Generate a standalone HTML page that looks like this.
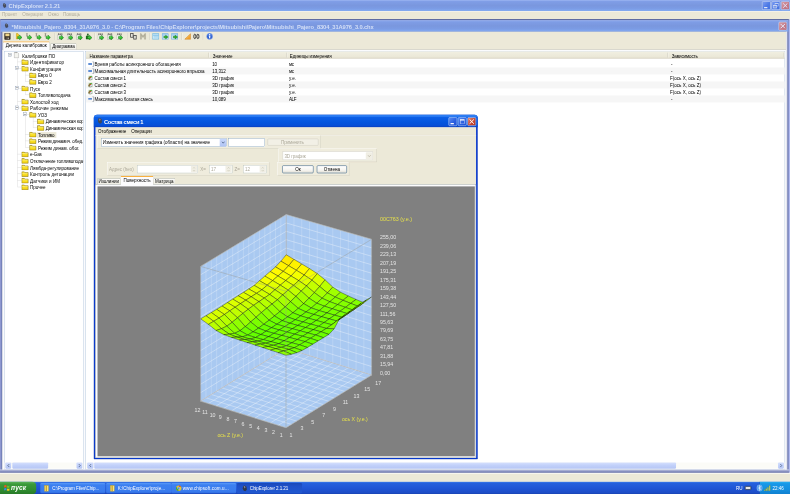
<!DOCTYPE html><html><head><meta charset="utf-8"><title>ChipExplorer 2.1.21</title><style>
*{box-sizing:border-box}
html,body{margin:0;padding:0}
body{width:790px;height:494px;overflow:hidden;background:#ece9d8;position:relative}
#w{position:absolute;left:0;top:0;width:1920px;height:1201px;transform:scale(.411458);transform-origin:0 0;filter:grayscale(0);font:11px "Liberation Sans",sans-serif;color:#000;overflow:hidden;background:#ece9d8}
#w div,#w span,#w svg{position:absolute}
.t{white-space:nowrap;line-height:14px;height:14px}
.b{font-weight:bold}
</style></head><body><div id="w">
<div style="left:0px;top:0px;width:1920px;height:26.6px;background:linear-gradient(#9db6f2 0%,#7f9de6 14%,#7a97de 50%,#7b9be4 75%,#83abf1 100%)"></div>
<svg style="left:5px;top:7px" width="12" height="13" viewBox="0 0 14 16"><path d="M3 2 L7 1 L11 4 L12 11 L8 15 L4 13 L2 8 Z" fill="#454b5c"/><path d="M4 3 L7 2 L9 5 L6 8 Z" fill="#6a7080"/></svg>
<div class="t b" style="left:20.9px;top:7.8px;font-size:14px;color:#d4dff7;letter-spacing:-0.292px;">ChipExplorer 2.1.21</div>
<div style="left:1852px;top:3px;width:21px;height:21px;background:linear-gradient(135deg,#7f9ef0,#4d7ae6 55%,#4470de);border:1px solid #dfe6f8;border-radius:3px"><div style="left:4px;top:13px;width:8px;height:3px;background:#dfe6f8"></div></div>
<div style="left:1875px;top:3px;width:21px;height:21px;background:linear-gradient(135deg,#7f9ef0,#4d7ae6 55%,#4470de);border:1px solid #dfe6f8;border-radius:3px"><div style="left:7px;top:3px;width:9px;height:8px;border:1px solid #dfe6f8;border-top-width:2px"></div><div style="left:3px;top:8px;width:9px;height:8px;border:1px solid #dfe6f8;border-top-width:2px;background:#7a98e4"></div></div>
<div style="left:1898px;top:3px;width:21px;height:21px;background:linear-gradient(135deg,#d9a0a8,#c47a88 60%,#b86c7c);border:1px solid #dfe6f8;border-radius:3px"><svg style="left:0;top:0" width="19" height="19" viewBox="0 0 19 19"><path d="M5 5 L14 14 M14 5 L5 14" stroke="#dfe6f8" stroke-width="2.4" stroke-linecap="round"/></svg></div>
<div style="left:0px;top:26.6px;width:1920px;height:21px;background:#ece9d8;border-top:1.6px solid #fff"></div>
<div class="t" style="left:4.6px;top:28.5px;color:#b2ae9e;letter-spacing:0.118px;">Проект</div>
<div class="t" style="left:54.0px;top:28.5px;color:#b2ae9e;letter-spacing:-0.083px;">Операции</div>
<div class="t" style="left:116.9px;top:28.5px;color:#b2ae9e;letter-spacing:0.172px;">Окно</div>
<div class="t" style="left:153.1px;top:28.5px;color:#b2ae9e;letter-spacing:-0.195px;">Помощь</div>
<div style="left:0px;top:47px;width:1920px;height:1102px;background:#b0b9ef"></div>
<div style="left:1px;top:47.4px;width:1916px;height:1101.6px;background:#7682ba;border-top:2px solid #47558f"></div>
<div style="left:2px;top:49.4px;width:1914px;height:27.6px;background:linear-gradient(#9db6f2 0%,#7f9de6 14%,#7a97de 50%,#7b9be4 75%,#83abf1 100%)"></div>
<svg style="left:10px;top:56px" width="12" height="13" viewBox="0 0 14 16"><path d="M3 2 L7 1 L11 4 L12 11 L8 15 L4 13 L2 8 Z" fill="#454b5c"/><path d="M4 3 L7 2 L9 5 L6 8 Z" fill="#6a7080"/></svg>
<div class="t b" style="left:28.2px;top:57.8px;font-size:14px;color:#d4dff7;letter-spacing:-0.287px;">*Mitsubishi_Pajero_8304_31A976_3.0 - C:\Program Files\ChipExplorer\projects\Mitsubishi\Pajero\Mitsubishi_Pajero_8304_31A976_3.0.chx</div>
<div style="left:1892px;top:53px;width:21px;height:21px;background:linear-gradient(135deg,#d9a0a8,#c47a88 60%,#b86c7c);border:1px solid #dfe6f8;border-radius:3px"><svg style="left:0;top:0" width="19" height="19" viewBox="0 0 19 19"><path d="M5 5 L14 14 M14 5 L5 14" stroke="#dfe6f8" stroke-width="2.4" stroke-linecap="round"/></svg></div>
<div style="left:6px;top:77px;width:1907px;height:1068px;background:#ece9d8"></div>
<div style="left:1910px;top:77px;width:3px;height:1068px;background:#e4e5ee"></div>
<svg style="left:9.7px;top:80px" width="17" height="17" viewBox="0 0 17 17"><rect x="1" y="1" width="14" height="15" rx="1" fill="#3a3228" stroke="#201a14"/><rect x="3" y="1.5" width="10" height="6.5" fill="#f0d78c"/><rect x="4" y="10.5" width="8" height="5" fill="#5a5046"/><rect x="9" y="11.5" width="2" height="3.5" fill="#d8d0c0"/></svg>
<div style="left:32.3px;top:80px;width:2px;height:17px;border-left:1px solid #c5c2b2;border-right:1px solid #fff"></div>
<svg style="left:38.2px;top:80px" width="17" height="17" viewBox="0 0 17 17"><path d="M1.5 1.5l4 0 3 5-3 8h-4z" fill="#f4cc28" stroke="#b08a10"/><path d="M5 8.5h4.5v-3.2l6 5.7-6 5.7v-3.2h-4.5z" fill="#2fc22f" stroke="#126a12" stroke-width="1.1" stroke-linejoin="round"/><path d="M5.8 9.7h4v-1.5" stroke="#8cf08c" stroke-width="1" fill="none"/></svg>
<svg style="left:61.5px;top:80px" width="17" height="17" viewBox="0 0 17 17"><path d="M1.5 2h4M3.5 2v5M1.5 7.5h4.5" stroke="#5a5a48" stroke-width="1.3" fill="none"/><path d="M5 8.5h4.5v-3.2l6 5.7-6 5.7v-3.2h-4.5z" fill="#2fc22f" stroke="#126a12" stroke-width="1.1" stroke-linejoin="round"/><path d="M5.8 9.7h4v-1.5" stroke="#8cf08c" stroke-width="1" fill="none"/></svg>
<svg style="left:84.6px;top:80px" width="17" height="17" viewBox="0 0 17 17"><path d="M1.5 2h4M3.5 2v5M1.5 7.5h4.5" stroke="#5a5a48" stroke-width="1.3" fill="none"/><path d="M5 8.5h4.5v-3.2l6 5.7-6 5.7v-3.2h-4.5z" fill="#2fc22f" stroke="#126a12" stroke-width="1.1" stroke-linejoin="round"/><path d="M5.8 9.7h4v-1.5" stroke="#8cf08c" stroke-width="1" fill="none"/></svg>
<svg style="left:107.4px;top:80px" width="17" height="17" viewBox="0 0 17 17"><path d="M1.5 2h4M3.5 2v5M1.5 7.5h4.5" stroke="#5a5a48" stroke-width="1.3" fill="none"/><path d="M5 8.5h4.5v-3.2l6 5.7-6 5.7v-3.2h-4.5z" fill="#2fc22f" stroke="#126a12" stroke-width="1.1" stroke-linejoin="round"/><path d="M5.8 9.7h4v-1.5" stroke="#8cf08c" stroke-width="1" fill="none"/></svg>
<div style="left:132.0px;top:80px;width:2px;height:17px;border-left:1px solid #c5c2b2;border-right:1px solid #fff"></div>
<svg style="left:138.5px;top:80px" width="17" height="17" viewBox="0 0 17 17"><rect x="1" y="5" width="12" height="11" fill="#f4f6f0" stroke="#9aa098"/><path d="M2 2h3M6.5 2h2M10 2h2.5M2 4h2M5.5 4h3.5M10.5 4h2" stroke="#333" stroke-width="1.5" fill="none"/><path d="M5 9h4.5v-3.2l6 5.7-6 5.7v-3.2h-4.5z" fill="#2fc22f" stroke="#126a12" stroke-width="1.1" stroke-linejoin="round"/><path d="M5.8 10.2h4v-1.5" stroke="#8cf08c" stroke-width="1" fill="none"/></svg>
<svg style="left:161.6px;top:80px" width="17" height="17" viewBox="0 0 17 17"><rect x="1" y="5" width="12" height="11" fill="#f4f6f0" stroke="#9aa098"/><path d="M2 2h3M6.5 2h2M10 2h2.5M2 4h2M5.5 4h3.5M10.5 4h2" stroke="#333" stroke-width="1.5" fill="none"/><path d="M5 9h4.5v-3.2l6 5.7-6 5.7v-3.2h-4.5z" fill="#2fc22f" stroke="#126a12" stroke-width="1.1" stroke-linejoin="round"/><path d="M5.8 10.2h4v-1.5" stroke="#8cf08c" stroke-width="1" fill="none"/></svg>
<svg style="left:184.7px;top:80px" width="17" height="17" viewBox="0 0 17 17"><rect x="1" y="5" width="12" height="11" fill="#f4f6f0" stroke="#9aa098"/><path d="M2 2h3M6.5 2h2M10 2h2.5M2 4h2M5.5 4h3.5M10.5 4h2" stroke="#333" stroke-width="1.5" fill="none"/><path d="M5 9h4.5v-3.2l6 5.7-6 5.7v-3.2h-4.5z" fill="#2fc22f" stroke="#126a12" stroke-width="1.1" stroke-linejoin="round"/><path d="M5.8 10.2h4v-1.5" stroke="#8cf08c" stroke-width="1" fill="none"/></svg>
<svg style="left:207.8px;top:80px" width="17" height="17" viewBox="0 0 17 17"><circle cx="5.5" cy="3.5" r="2.3" fill="#2a6a2a"/><path d="M1 8q4.5-3 9 0v7H1z" fill="#1e7a1e" stroke="#0e4a0e"/><path d="M5 9h4.5v-3.2l6 5.7-6 5.7v-3.2h-4.5z" fill="#2fc22f" stroke="#126a12" stroke-width="1.1" stroke-linejoin="round"/><path d="M5.8 10.2h4v-1.5" stroke="#8cf08c" stroke-width="1" fill="none"/></svg>
<div style="left:229.7px;top:80px;width:2px;height:17px;border-left:1px solid #c5c2b2;border-right:1px solid #fff"></div>
<svg style="left:237.0px;top:80px" width="17" height="17" viewBox="0 0 17 17"><rect x="1" y="5" width="12" height="11" fill="#f4f6f0" stroke="#9aa098"/><path d="M2 2h3M6.5 2h2M10 2h2.5M2 4h2M5.5 4h3.5M10.5 4h2" stroke="#333" stroke-width="1.5" fill="none"/><path d="M5 9h4.5v-3.2l6 5.7-6 5.7v-3.2h-4.5z" fill="#2fc22f" stroke="#126a12" stroke-width="1.1" stroke-linejoin="round"/><path d="M5.8 10.2h4v-1.5" stroke="#8cf08c" stroke-width="1" fill="none"/></svg>
<svg style="left:260.1px;top:80px" width="17" height="17" viewBox="0 0 17 17"><rect x="1" y="5" width="12" height="11" fill="#f4f6f0" stroke="#9aa098"/><path d="M2 2h3M6.5 2h2M10 2h2.5M2 4h2M5.5 4h3.5M10.5 4h2" stroke="#333" stroke-width="1.5" fill="none"/><path d="M5 9h4.5v-3.2l6 5.7-6 5.7v-3.2h-4.5z" fill="#2fc22f" stroke="#126a12" stroke-width="1.1" stroke-linejoin="round"/><path d="M5.8 10.2h4v-1.5" stroke="#8cf08c" stroke-width="1" fill="none"/></svg>
<svg style="left:283.1px;top:80px" width="17" height="17" viewBox="0 0 17 17"><rect x="1" y="5" width="12" height="11" fill="#f4f6f0" stroke="#9aa098"/><path d="M2 2h3M6.5 2h2M10 2h2.5M2 4h2M5.5 4h3.5M10.5 4h2" stroke="#333" stroke-width="1.5" fill="none"/><path d="M5 9h4.5v-3.2l6 5.7-6 5.7v-3.2h-4.5z" fill="#2fc22f" stroke="#126a12" stroke-width="1.1" stroke-linejoin="round"/><path d="M5.8 10.2h4v-1.5" stroke="#8cf08c" stroke-width="1" fill="none"/></svg>
<div style="left:309.4px;top:80px;width:2px;height:17px;border-left:1px solid #c5c2b2;border-right:1px solid #fff"></div>
<svg style="left:315.9px;top:80px" width="17" height="17" viewBox="0 0 17 17"><rect x="1.5" y="1.5" width="6" height="9" fill="#e8e8e0" stroke="#383838" stroke-width="1.8"/><rect x="9" y="6" width="6" height="9" fill="#e8e8e0" stroke="#383838" stroke-width="1.8"/></svg>
<svg style="left:339.0px;top:80px" width="17" height="17" viewBox="0 0 17 17"><path d="M2 15.5V1.5h2l4.5 6 4.5-6h2v14h-3V7l-3.5 4.5L5 7v8.5z" fill="#b4b09c" stroke="#98947f" stroke-width=".6"/></svg>
<div style="left:362.9px;top:80px;width:2px;height:17px;border-left:1px solid #c5c2b2;border-right:1px solid #fff"></div>
<svg style="left:370.1px;top:80px" width="17" height="17" viewBox="0 0 17 17"><rect x="1" y="2" width="15" height="13" fill="#dcf2fc" stroke="#5aaee0" stroke-width="1.5"/><path d="M2 5.5h13" stroke="#5aaee0" stroke-width="2"/><path d="M3 9h11M3 12h11" stroke="#7cc0e4" stroke-width="1.3"/></svg>
<svg style="left:393.2px;top:80px" width="17" height="17" viewBox="0 0 17 17"><rect x="1" y="2" width="15" height="13" fill="#d4ecfa" stroke="#5aa4e0" stroke-width="1.5"/><path d="M2 5h13" stroke="#5aa4e0" stroke-width="1.6"/><path d="M5 8.2h4.5v-2.7l6.5 4.5-6.5 4.5v-2.7h-4.5z" fill="#2ab02a" stroke="#126a12" stroke-width=".9"/></svg>
<svg style="left:416.3px;top:80px" width="17" height="17" viewBox="0 0 17 17"><rect x="1" y="2" width="15" height="13" fill="#d4ecfa" stroke="#5aa4e0" stroke-width="1.5"/><path d="M2 5h13" stroke="#5aa4e0" stroke-width="1.6"/><path d="M5 8.2h4.5v-2.7l6.5 4.5-6.5 4.5v-2.7h-4.5z" fill="#2ab02a" stroke="#126a12" stroke-width=".9"/></svg>
<div style="left:441.1px;top:80px;width:2px;height:17px;border-left:1px solid #c5c2b2;border-right:1px solid #fff"></div>
<svg style="left:448.4px;top:80px" width="17" height="17" viewBox="0 0 17 17"><path d="M1 15.5L15 2v13.5z" fill="#f2a230" stroke="#c47a16"/><path d="M5 14.5L14 5.5" stroke="#f8c870" stroke-width="1.2"/></svg>
<svg style="left:469.1px;top:80px" width="17" height="17" viewBox="0 0 17 17"><ellipse cx="4.5" cy="8.5" rx="2.6" ry="5.5" fill="none" stroke="#2c2c2c" stroke-width="2.1"/><ellipse cx="12" cy="8.5" rx="2.6" ry="5.5" fill="none" stroke="#2c2c2c" stroke-width="2.1"/></svg>
<div style="left:493.4px;top:80px;width:2px;height:17px;border-left:1px solid #c5c2b2;border-right:1px solid #fff"></div>
<svg style="left:500.7px;top:80px" width="17" height="17" viewBox="0 0 17 17"><circle cx="8.5" cy="8.5" r="7.4" fill="#2a5ccc" stroke="#b4c8f2" stroke-width="1.2"/><circle cx="8.5" cy="6" r="5" fill="#5c8cec" opacity=".6"/><rect x="7.2" y="7" width="2.7" height="6.2" fill="#fff"/><circle cx="8.5" cy="4.4" r="1.6" fill="#fff"/></svg>
<div style="left:121.5px;top:104.5px;width:64.4px;height:17.0px;background:linear-gradient(#fdfdfb,#f0eee4);border:1px solid #919b9c;border-bottom:none;border-radius:3px 3px 0 0"></div>
<div class="t" style="left:126.9px;top:106.0px;letter-spacing:-0.280px;">Диаграмма</div>
<div style="left:6px;top:119.8px;width:1904px;height:1px;background:#a8aaa0"></div>
<div style="left:6px;top:120.8px;width:1904px;height:1022.5px;background:#fafbfe"></div>
<div style="left:7.3px;top:100.4px;width:113.7px;height:22.4px;background:#fcfcfe;border:1px solid #919b9c;border-bottom:none;border-top:3px solid #f8b040;border-radius:3px 3px 0 0"></div>
<div class="t" style="left:13.9px;top:103.8px;letter-spacing:0.016px;">Дерево калибровок</div>
<div style="left:9.7px;top:123.9px;width:194.2px;height:1016.6999999999999px;background:#fff;border:1px solid #a9bdd8"></div>
<div style="left:207.6px;top:123.9px;width:1700.2px;height:1016.6999999999999px;background:#fff;border:1px solid #a9bdd8"></div>
<div style="left:10.7px;top:124.9px;width:191.2px;height:996.5px;overflow:hidden">
<div style="left:31.0px;top:17.0px;width:1px;height:312.0px;background:#d6d6d6"></div>
<div style="left:50.0px;top:49.0px;width:1px;height:24.0px;background:#d6d6d6"></div>
<div style="left:50.0px;top:97.0px;width:1px;height:8.0px;background:#d6d6d6"></div>
<div style="left:50.0px;top:145.0px;width:1px;height:88.0px;background:#d6d6d6"></div>
<div style="left:68.9px;top:161.0px;width:1px;height:24.0px;background:#d6d6d6"></div>
<div style="left:8.9px;top:4.5px;width:9px;height:9px;border:1px solid #8a9ab0;background:#fff"><div style="left:1px;top:3px;width:5px;height:1px;background:#333"></div></div>
<svg style="left:22.8px;top:0.0px" width="14" height="17" viewBox="0 0 14 17"><path d="M1.5 2.5h8l3 3v10h-11z" fill="#f4f4f0" stroke="#909090"/><path d="M4 1v3M7 1v3" stroke="#707070"/></svg>
<div class="t" style="left:43.5px;top:3.8px;letter-spacing:0.001px;">Калибровки ПО</div>
<div style="left:31.099999999999998px;top:25.0px;width:10.7px;height:1px;background:#d4d4d4"></div>
<svg style="left:41.8px;top:19.0px" width="18" height="14" viewBox="0 0 18 14"><path d="M1 1.5h6l1.5 2H16.5v9.5H1z" fill="#f9df22" stroke="#6e5c10" stroke-width="1.3"/><path d="M2 5h13.5" stroke="#fff6a8" stroke-width="1.4"/><path d="M2 11.5h13.5" stroke="#e0b810" stroke-width="1.4"/></svg>
<div class="t" style="left:62.5px;top:19.8px;letter-spacing:0.109px;">Идентификатор</div>
<div style="left:31.099999999999998px;top:41.0px;width:10.7px;height:1px;background:#d4d4d4"></div>
<div style="left:26.199999999999996px;top:36.5px;width:9px;height:9px;border:1px solid #8a9ab0;background:#fff"><div style="left:1px;top:3px;width:5px;height:1px;background:#333"></div></div>
<svg style="left:41.8px;top:35.0px" width="18" height="14" viewBox="0 0 18 14"><path d="M1 1.5h6l1.5 2H16.5v9.5H1z" fill="#f9df22" stroke="#6e5c10" stroke-width="1.3"/><path d="M2 5h13.5" stroke="#fff6a8" stroke-width="1.4"/><path d="M2 11.5h13.5" stroke="#e0b810" stroke-width="1.4"/></svg>
<div class="t" style="left:62.5px;top:35.8px;letter-spacing:0.127px;">Конфигурация</div>
<div style="left:50.099999999999994px;top:57.0px;width:10.7px;height:1px;background:#d4d4d4"></div>
<svg style="left:60.8px;top:51.0px" width="18" height="14" viewBox="0 0 18 14"><path d="M1 1.5h6l1.5 2H16.5v9.5H1z" fill="#f9df22" stroke="#6e5c10" stroke-width="1.3"/><path d="M2 5h13.5" stroke="#fff6a8" stroke-width="1.4"/><path d="M2 11.5h13.5" stroke="#e0b810" stroke-width="1.4"/></svg>
<div class="t" style="left:81.5px;top:51.8px;letter-spacing:-0.216px;">Евро 0</div>
<div style="left:50.099999999999994px;top:73.0px;width:10.7px;height:1px;background:#d4d4d4"></div>
<svg style="left:60.8px;top:67.0px" width="18" height="14" viewBox="0 0 18 14"><path d="M1 1.5h6l1.5 2H16.5v9.5H1z" fill="#f9df22" stroke="#6e5c10" stroke-width="1.3"/><path d="M2 5h13.5" stroke="#fff6a8" stroke-width="1.4"/><path d="M2 11.5h13.5" stroke="#e0b810" stroke-width="1.4"/></svg>
<div class="t" style="left:81.5px;top:67.8px;letter-spacing:-0.216px;">Евро 2</div>
<div style="left:31.099999999999998px;top:89.0px;width:10.7px;height:1px;background:#d4d4d4"></div>
<div style="left:26.199999999999996px;top:84.5px;width:9px;height:9px;border:1px solid #8a9ab0;background:#fff"><div style="left:1px;top:3px;width:5px;height:1px;background:#333"></div></div>
<svg style="left:41.8px;top:83.0px" width="18" height="14" viewBox="0 0 18 14"><path d="M1 1.5h6l1.5 2H16.5v9.5H1z" fill="#f9df22" stroke="#6e5c10" stroke-width="1.3"/><path d="M2 5h13.5" stroke="#fff6a8" stroke-width="1.4"/><path d="M2 11.5h13.5" stroke="#e0b810" stroke-width="1.4"/></svg>
<div class="t" style="left:62.5px;top:83.8px;letter-spacing:0.056px;">Пуск</div>
<div style="left:50.099999999999994px;top:105.0px;width:10.7px;height:1px;background:#d4d4d4"></div>
<svg style="left:60.8px;top:99.0px" width="18" height="14" viewBox="0 0 18 14"><path d="M1 1.5h6l1.5 2H16.5v9.5H1z" fill="#f9df22" stroke="#6e5c10" stroke-width="1.3"/><path d="M2 5h13.5" stroke="#fff6a8" stroke-width="1.4"/><path d="M2 11.5h13.5" stroke="#e0b810" stroke-width="1.4"/></svg>
<div class="t" style="left:81.5px;top:99.8px;letter-spacing:0.089px;">Топливоподача</div>
<div style="left:31.099999999999998px;top:121.0px;width:10.7px;height:1px;background:#d4d4d4"></div>
<svg style="left:41.8px;top:115.0px" width="18" height="14" viewBox="0 0 18 14"><path d="M1 1.5h6l1.5 2H16.5v9.5H1z" fill="#f9df22" stroke="#6e5c10" stroke-width="1.3"/><path d="M2 5h13.5" stroke="#fff6a8" stroke-width="1.4"/><path d="M2 11.5h13.5" stroke="#e0b810" stroke-width="1.4"/></svg>
<div class="t" style="left:62.5px;top:115.8px;letter-spacing:0.009px;">Холостой ход</div>
<div style="left:31.099999999999998px;top:136.99999999999997px;width:10.7px;height:1px;background:#d4d4d4"></div>
<div style="left:26.199999999999996px;top:132.5px;width:9px;height:9px;border:1px solid #8a9ab0;background:#fff"><div style="left:1px;top:3px;width:5px;height:1px;background:#333"></div></div>
<svg style="left:41.8px;top:131.0px" width="18" height="14" viewBox="0 0 18 14"><path d="M1 1.5h6l1.5 2H16.5v9.5H1z" fill="#f9df22" stroke="#6e5c10" stroke-width="1.3"/><path d="M2 5h13.5" stroke="#fff6a8" stroke-width="1.4"/><path d="M2 11.5h13.5" stroke="#e0b810" stroke-width="1.4"/></svg>
<div class="t" style="left:62.5px;top:131.8px;letter-spacing:0.389px;">Рабочие режимы</div>
<div style="left:50.099999999999994px;top:152.99999999999997px;width:10.7px;height:1px;background:#d4d4d4"></div>
<div style="left:45.199999999999996px;top:148.5px;width:9px;height:9px;border:1px solid #8a9ab0;background:#fff"><div style="left:1px;top:3px;width:5px;height:1px;background:#333"></div></div>
<svg style="left:60.8px;top:147.0px" width="18" height="14" viewBox="0 0 18 14"><path d="M1 1.5h6l1.5 2H16.5v9.5H1z" fill="#f9df22" stroke="#6e5c10" stroke-width="1.3"/><path d="M2 5h13.5" stroke="#fff6a8" stroke-width="1.4"/><path d="M2 11.5h13.5" stroke="#e0b810" stroke-width="1.4"/></svg>
<div class="t" style="left:81.5px;top:147.8px;letter-spacing:0.017px;">УОЗ</div>
<div style="left:69.0px;top:168.99999999999997px;width:10.7px;height:1px;background:#d4d4d4"></div>
<svg style="left:79.7px;top:163.0px" width="18" height="14" viewBox="0 0 18 14"><path d="M1 1.5h6l1.5 2H16.5v9.5H1z" fill="#f9df22" stroke="#6e5c10" stroke-width="1.3"/><path d="M2 5h13.5" stroke="#fff6a8" stroke-width="1.4"/><path d="M2 11.5h13.5" stroke="#e0b810" stroke-width="1.4"/></svg>
<div class="t" style="left:100.4px;top:163.8px;letter-spacing:-0.093px;">Динамическая коррекция</div>
<div style="left:69.0px;top:184.99999999999997px;width:10.7px;height:1px;background:#d4d4d4"></div>
<svg style="left:79.7px;top:179.0px" width="18" height="14" viewBox="0 0 18 14"><path d="M1 1.5h6l1.5 2H16.5v9.5H1z" fill="#f9df22" stroke="#6e5c10" stroke-width="1.3"/><path d="M2 5h13.5" stroke="#fff6a8" stroke-width="1.4"/><path d="M2 11.5h13.5" stroke="#e0b810" stroke-width="1.4"/></svg>
<div class="t" style="left:100.4px;top:179.8px;letter-spacing:-0.093px;">Динамическая коррекция</div>
<div style="left:50.099999999999994px;top:200.99999999999997px;width:10.7px;height:1px;background:#d4d4d4"></div>
<svg style="left:60.8px;top:195.0px" width="18" height="14" viewBox="0 0 18 14"><path d="M1 1.5h6l1.5 2H16.5v9.5H1z" fill="#f9df22" stroke="#6e5c10" stroke-width="1.3"/><path d="M2 5h13.5" stroke="#fff6a8" stroke-width="1.4"/><path d="M2 11.5h13.5" stroke="#e0b810" stroke-width="1.4"/></svg>
<div class="t" style="left:81.5px;top:195.8px;letter-spacing:-0.319px;background:#ece9d8;padding:0 5px 0 2px;margin-left:-2px;">Топливо</div>
<div style="left:50.099999999999994px;top:216.99999999999997px;width:10.7px;height:1px;background:#d4d4d4"></div>
<svg style="left:60.8px;top:211.0px" width="18" height="14" viewBox="0 0 18 14"><path d="M1 1.5h6l1.5 2H16.5v9.5H1z" fill="#f9df22" stroke="#6e5c10" stroke-width="1.3"/><path d="M2 5h13.5" stroke="#fff6a8" stroke-width="1.4"/><path d="M2 11.5h13.5" stroke="#e0b810" stroke-width="1.4"/></svg>
<div class="t" style="left:81.5px;top:211.8px;letter-spacing:-0.241px;">Режим динамич. обед.</div>
<div style="left:50.099999999999994px;top:232.99999999999997px;width:10.7px;height:1px;background:#d4d4d4"></div>
<svg style="left:60.8px;top:227.0px" width="18" height="14" viewBox="0 0 18 14"><path d="M1 1.5h6l1.5 2H16.5v9.5H1z" fill="#f9df22" stroke="#6e5c10" stroke-width="1.3"/><path d="M2 5h13.5" stroke="#fff6a8" stroke-width="1.4"/><path d="M2 11.5h13.5" stroke="#e0b810" stroke-width="1.4"/></svg>
<div class="t" style="left:81.5px;top:227.8px;letter-spacing:0.053px;">Режим динам. обог.</div>
<div style="left:31.099999999999998px;top:248.99999999999997px;width:10.7px;height:1px;background:#d4d4d4"></div>
<svg style="left:41.8px;top:243.0px" width="18" height="14" viewBox="0 0 18 14"><path d="M1 1.5h6l1.5 2H16.5v9.5H1z" fill="#f9df22" stroke="#6e5c10" stroke-width="1.3"/><path d="M2 5h13.5" stroke="#fff6a8" stroke-width="1.4"/><path d="M2 11.5h13.5" stroke="#e0b810" stroke-width="1.4"/></svg>
<div class="t" style="left:62.5px;top:243.8px;letter-spacing:-0.353px;">e-Gas</div>
<div style="left:31.099999999999998px;top:265.0px;width:10.7px;height:1px;background:#d4d4d4"></div>
<svg style="left:41.8px;top:259.0px" width="18" height="14" viewBox="0 0 18 14"><path d="M1 1.5h6l1.5 2H16.5v9.5H1z" fill="#f9df22" stroke="#6e5c10" stroke-width="1.3"/><path d="M2 5h13.5" stroke="#fff6a8" stroke-width="1.4"/><path d="M2 11.5h13.5" stroke="#e0b810" stroke-width="1.4"/></svg>
<div class="t" style="left:62.5px;top:259.8px;letter-spacing:-0.160px;">Отключение топливоподачи</div>
<div style="left:31.099999999999998px;top:281.0px;width:10.7px;height:1px;background:#d4d4d4"></div>
<svg style="left:41.8px;top:275.0px" width="18" height="14" viewBox="0 0 18 14"><path d="M1 1.5h6l1.5 2H16.5v9.5H1z" fill="#f9df22" stroke="#6e5c10" stroke-width="1.3"/><path d="M2 5h13.5" stroke="#fff6a8" stroke-width="1.4"/><path d="M2 11.5h13.5" stroke="#e0b810" stroke-width="1.4"/></svg>
<div class="t" style="left:62.5px;top:275.8px;letter-spacing:-0.025px;">Лямбда-регулирование</div>
<div style="left:31.099999999999998px;top:297.0px;width:10.7px;height:1px;background:#d4d4d4"></div>
<svg style="left:41.8px;top:291.0px" width="18" height="14" viewBox="0 0 18 14"><path d="M1 1.5h6l1.5 2H16.5v9.5H1z" fill="#f9df22" stroke="#6e5c10" stroke-width="1.3"/><path d="M2 5h13.5" stroke="#fff6a8" stroke-width="1.4"/><path d="M2 11.5h13.5" stroke="#e0b810" stroke-width="1.4"/></svg>
<div class="t" style="left:62.5px;top:291.8px;letter-spacing:0.117px;">Контроль детонации</div>
<div style="left:31.099999999999998px;top:313.0px;width:10.7px;height:1px;background:#d4d4d4"></div>
<svg style="left:41.8px;top:307.0px" width="18" height="14" viewBox="0 0 18 14"><path d="M1 1.5h6l1.5 2H16.5v9.5H1z" fill="#f9df22" stroke="#6e5c10" stroke-width="1.3"/><path d="M2 5h13.5" stroke="#fff6a8" stroke-width="1.4"/><path d="M2 11.5h13.5" stroke="#e0b810" stroke-width="1.4"/></svg>
<div class="t" style="left:62.5px;top:307.8px;letter-spacing:0.219px;">Датчики и ИМ</div>
<div style="left:31.099999999999998px;top:329.0px;width:10.7px;height:1px;background:#d4d4d4"></div>
<svg style="left:41.8px;top:323.0px" width="18" height="14" viewBox="0 0 18 14"><path d="M1 1.5h6l1.5 2H16.5v9.5H1z" fill="#f9df22" stroke="#6e5c10" stroke-width="1.3"/><path d="M2 5h13.5" stroke="#fff6a8" stroke-width="1.4"/><path d="M2 11.5h13.5" stroke="#e0b810" stroke-width="1.4"/></svg>
<div class="t" style="left:62.5px;top:323.8px;letter-spacing:-0.033px;">Прочее</div>
</div>
<div style="left:10.7px;top:1123.8px;width:191.2px;height:15.600000000000136px;background:#fbfbf7"></div>
<div style="left:12.9px;top:1123.8px;width:14.6px;height:15.600000000000136px;background:linear-gradient(#d6e0fd,#c2d1fa 45%,#b6c6f5);border-radius:2px"><svg style="left:4px;top:3px" width="7" height="9" viewBox="0 0 7 9"><path d="M5.5 1L2 4.5 5.5 8" fill="none" stroke="#4d6185" stroke-width="2"/></svg></div>
<div style="left:185.9px;top:1123.8px;width:14.6px;height:15.600000000000136px;background:linear-gradient(#d6e0fd,#c2d1fa 45%,#b6c6f5);border-radius:2px"><svg style="left:4px;top:3px" width="7" height="9" viewBox="0 0 7 9"><path d="M1.5 1L5 4.5 1.5 8" fill="none" stroke="#4d6185" stroke-width="2"/></svg></div>
<div style="left:29.9px;top:1123.8px;width:86.8px;height:15.600000000000136px;background:linear-gradient(#d6e0fd,#c2d1fa 45%,#b6c6f5);border-radius:2px"></div>
<div style="left:208.6px;top:124.9px;width:1698.2px;height:18.5px;background:linear-gradient(#f1efe2,#ebe8d8 75%,#dedac9);border-bottom:1px solid #d0ccbc"></div>
<div class="t" style="left:217.8px;top:128.6px;letter-spacing:-0.145px;">Название параметра</div>
<div class="t" style="left:517.2px;top:128.6px;letter-spacing:-0.083px;">Значение</div>
<div class="t" style="left:704.3px;top:128.6px;letter-spacing:-0.166px;">Единицы измерения</div>
<div class="t" style="left:1632.5px;top:128.6px;letter-spacing:-0.265px;">Зависимость</div>
<div style="left:507.0px;top:127.9px;width:2px;height:12.5px;border-left:1px solid #c5c2b2;border-right:1px solid #fff"></div>
<div style="left:696.1px;top:127.9px;width:2px;height:12.5px;border-left:1px solid #c5c2b2;border-right:1px solid #fff"></div>
<div style="left:1622.3px;top:127.9px;width:2px;height:12.5px;border-left:1px solid #c5c2b2;border-right:1px solid #fff"></div>
<div style="left:1903.0px;top:127.9px;width:2px;height:12.5px;border-left:1px solid #c5c2b2;border-right:1px solid #fff"></div>
<svg style="left:213.9px;top:148.5px" width="15" height="14" viewBox="0 0 15 14"><path d="M.5 6.5h9" stroke="#2868c8" stroke-width="3.2"/><path d="M10.5 1h3v12h-3" fill="#fff" stroke="#707888" stroke-width="1.3"/></svg>
<div class="t" style="left:229.9px;top:148.5px;letter-spacing:-0.048px;">Время работы асинхронного обогащения</div>
<div class="t" style="left:516.0px;top:148.5px;letter-spacing:-0.771px;">10</div>
<div class="t" style="left:702.1px;top:148.5px;letter-spacing:-0.820px;">мс</div>
<div class="t" style="left:1630.5px;top:148.5px;">-</div>
<div style="left:208.6px;top:164.0px;width:1698.2px;height:17px;background:#f6f6f6"></div>
<svg style="left:213.9px;top:165.5px" width="15" height="14" viewBox="0 0 15 14"><path d="M.5 6.5h9" stroke="#2868c8" stroke-width="3.2"/><path d="M10.5 1h3v12h-3" fill="#fff" stroke="#707888" stroke-width="1.3"/></svg>
<div class="t" style="left:229.9px;top:165.5px;letter-spacing:-0.011px;">Максимальная длительность асинхронного впрыска</div>
<div class="t" style="left:516.0px;top:165.5px;letter-spacing:-0.180px;">13,312</div>
<div class="t" style="left:702.1px;top:165.5px;letter-spacing:-0.820px;">мс</div>
<div class="t" style="left:1630.5px;top:165.5px;">-</div>
<svg style="left:212.9px;top:182.5px" width="13" height="13" viewBox="0 0 13 13"><rect x=".5" y=".5" width="12" height="12" rx="2" fill="#dfe8d8"/><path d="M1 9l3-6 4 1-2 7z" fill="#8a7440"/><path d="M4 3l5-2 3 4-4 1z" fill="#58a838"/><path d="M6 7l5-2 1 4-5 3z" fill="#d8e4f0"/><path d="M5 5l3-1 1 2-3 1z" fill="#d04030"/><path d="M2 10l4 2 6-3" stroke="#606848" fill="none"/></svg>
<div class="t" style="left:229.9px;top:182.5px;letter-spacing:-0.227px;">Состав смеси 1</div>
<div class="t" style="left:516.0px;top:182.5px;letter-spacing:-0.124px;">3D график</div>
<div class="t" style="left:702.1px;top:182.5px;letter-spacing:0.460px;">у.е.</div>
<div class="t" style="left:1628.4px;top:182.5px;letter-spacing:0.021px;">F(ось X, ось Z)</div>
<div style="left:208.6px;top:198.0px;width:1698.2px;height:17px;background:#f6f6f6"></div>
<svg style="left:212.9px;top:199.5px" width="13" height="13" viewBox="0 0 13 13"><rect x=".5" y=".5" width="12" height="12" rx="2" fill="#dfe8d8"/><path d="M1 9l3-6 4 1-2 7z" fill="#8a7440"/><path d="M4 3l5-2 3 4-4 1z" fill="#58a838"/><path d="M6 7l5-2 1 4-5 3z" fill="#d8e4f0"/><path d="M5 5l3-1 1 2-3 1z" fill="#d04030"/><path d="M2 10l4 2 6-3" stroke="#606848" fill="none"/></svg>
<div class="t" style="left:229.9px;top:199.5px;letter-spacing:-0.227px;">Состав смеси 2</div>
<div class="t" style="left:516.0px;top:199.5px;letter-spacing:-0.124px;">3D график</div>
<div class="t" style="left:702.1px;top:199.5px;letter-spacing:0.460px;">у.е.</div>
<div class="t" style="left:1628.4px;top:199.5px;letter-spacing:0.021px;">F(ось X, ось Z)</div>
<svg style="left:212.9px;top:216.5px" width="13" height="13" viewBox="0 0 13 13"><rect x=".5" y=".5" width="12" height="12" rx="2" fill="#dfe8d8"/><path d="M1 9l3-6 4 1-2 7z" fill="#8a7440"/><path d="M4 3l5-2 3 4-4 1z" fill="#58a838"/><path d="M6 7l5-2 1 4-5 3z" fill="#d8e4f0"/><path d="M5 5l3-1 1 2-3 1z" fill="#d04030"/><path d="M2 10l4 2 6-3" stroke="#606848" fill="none"/></svg>
<div class="t" style="left:229.9px;top:216.5px;letter-spacing:-0.227px;">Состав смеси 3</div>
<div class="t" style="left:516.0px;top:216.5px;letter-spacing:-0.124px;">3D график</div>
<div class="t" style="left:702.1px;top:216.5px;letter-spacing:0.460px;">у.е.</div>
<div class="t" style="left:1628.4px;top:216.5px;letter-spacing:0.021px;">F(ось X, ось Z)</div>
<div style="left:208.6px;top:232.0px;width:1698.2px;height:17px;background:#f6f6f6"></div>
<svg style="left:213.9px;top:233.5px" width="15" height="14" viewBox="0 0 15 14"><path d="M.5 6.5h9" stroke="#2868c8" stroke-width="3.2"/><path d="M10.5 1h3v12h-3" fill="#fff" stroke="#707888" stroke-width="1.3"/></svg>
<div class="t" style="left:229.9px;top:233.5px;letter-spacing:-0.166px;">Максимально богатая смесь</div>
<div class="t" style="left:516.0px;top:233.5px;letter-spacing:-0.180px;">10,089</div>
<div class="t" style="left:702.1px;top:233.5px;letter-spacing:-0.892px;">ALF</div>
<div class="t" style="left:1630.5px;top:233.5px;">-</div>
<div style="left:208.6px;top:1123.8px;width:1698.2px;height:15.600000000000136px;background:#fbfbf7"></div>
<div style="left:212.2px;top:1123.8px;width:14.6px;height:15.600000000000136px;background:linear-gradient(#d6e0fd,#c2d1fa 45%,#b6c6f5);border-radius:2px"><svg style="left:4px;top:3px" width="7" height="9" viewBox="0 0 7 9"><path d="M5.5 1L2 4.5 5.5 8" fill="none" stroke="#4d6185" stroke-width="2"/></svg></div>
<div style="left:1890.8px;top:1123.8px;width:14.6px;height:15.600000000000136px;background:linear-gradient(#d6e0fd,#c2d1fa 45%,#b6c6f5);border-radius:2px"><svg style="left:4px;top:3px" width="7" height="9" viewBox="0 0 7 9"><path d="M1.5 1L5 4.5 1.5 8" fill="none" stroke="#4d6185" stroke-width="2"/></svg></div>
<div style="left:228.5px;top:1123.8px;width:1414.5px;height:15.600000000000136px;background:linear-gradient(#d6e0fd,#c2d1fa 45%,#b6c6f5);border-radius:2px"></div>
<div style="left:0px;top:1141.1px;width:1918px;height:7.5px;background:linear-gradient(#d0d4e8 0%,#9aa2cc 40%,#7a84b8 75%,#565e94 100%)"></div>
<div style="left:0px;top:1148.6px;width:1920px;height:2px;background:#fff"></div>
<div style="left:228px;top:279px;width:933px;height:837px;background:#0a3bd0;border-radius:8px 8px 0 0;border:1px solid #0830b0"></div>
<div style="left:228px;top:279px;width:933px;height:30px;background:linear-gradient(#0a5fe8 0%,#3b8af8 8%,#0b5ee6 22%,#0455de 60%,#0650d8 85%,#0a3fc0 100%);border-radius:8px 8px 0 0"></div>
<svg style="left:236px;top:286px" width="14" height="16" viewBox="0 0 14 16"><path d="M3 2 L7 1 L11 4 L12 11 L8 15 L4 13 L2 8 Z" fill="#404858"/><path d="M4 3 L7 2 L9 5 L6 8 Z" fill="#7880a0"/></svg>
<div class="t b" style="left:252.8px;top:289.5px;font-size:14px;color:#fff;letter-spacing:-0.853px;">Состав смеси 1</div>
<div style="left:1089.5px;top:285px;width:21px;height:21px;background:linear-gradient(135deg,#5c8cf0,#2a5fe0 60%,#2050d0);border:1px solid #fff;border-radius:3px"><div style="left:4px;top:13px;width:8px;height:3px;background:#fff"></div></div>
<div style="left:1112.6px;top:285px;width:21px;height:21px;background:linear-gradient(135deg,#5c8cf0,#2a5fe0 60%,#2050d0);border:1px solid #fff;border-radius:3px"><div style="left:4px;top:4px;width:11px;height:11px;border:1px solid #fff;border-top-width:3px"></div></div>
<div style="left:1135.7px;top:285px;width:21px;height:21px;background:linear-gradient(135deg,#e08a78,#c4452e 60%,#b83c28);border:1px solid #fff;border-radius:3px"><svg style="left:0;top:0" width="19" height="19" viewBox="0 0 19 19"><path d="M5 5 L14 14 M14 5 L5 14" stroke="#fff" stroke-width="2.4" stroke-linecap="round"/></svg></div>
<div style="left:232px;top:309px;width:925px;height:803px;background:#ece9d8"></div>
<div class="t" style="left:238.2px;top:311.9px;letter-spacing:-0.150px;">Отображение</div>
<div class="t" style="left:318.9px;top:311.9px;letter-spacing:-0.174px;">Операции</div>
<div style="left:232px;top:327.6px;width:925px;height:2px;border-top:1px solid #d8d4c4;border-bottom:1px solid #fff"></div>
<div style="left:236.5px;top:329.3px;width:542.7px;height:31.599999999999966px;border:1px solid #fff;border-right-color:#cfcbbb;border-bottom-color:#cfcbbb;background:#efecdd"></div>
<div style="left:246.0px;top:335.9px;width:304.5px;height:20.900000000000034px;background:#fff;border:1px solid #7f9db9"></div>
<div class="t" style="left:249.6px;top:339.6px;letter-spacing:-0.034px;">Изменить значения графика (области) на значение</div>
<div style="left:534.2px;top:337.1px;width:15.599999999999909px;height:18.5px;background:linear-gradient(#c8d8fc,#b0c4f4);border-radius:2px"><svg style="left:4px;top:6px" width="9" height="7" viewBox="0 0 9 7"><path d="M1 1l3.5 4L8 1" fill="none" stroke="#4d6185" stroke-width="2"/></svg></div>
<div style="left:554.9px;top:335.9px;width:88.70000000000005px;height:20.900000000000034px;background:#fff;border:1px solid #7f9db9"></div>
<div style="left:649.6px;top:336.9px;width:124.5px;height:17.0px;background:#f2f0e6;border:1px solid #c9c7ba;border-radius:3px"></div>
<div class="t" style="left:682.9px;top:338.6px;color:#aca899;letter-spacing:-0.158px;">Применить</div>
<div style="left:676.6px;top:360.9px;width:239.19999999999993px;height:33.30000000000001px;border:1px solid #fff;border-right-color:#cfcbbb;border-bottom-color:#cfcbbb;background:#efecdd"></div>
<div style="left:686.6px;top:368.4px;width:219.0px;height:20.5px;background:#fff;border:1px solid #c9c7ba"></div>
<div class="t" style="left:691.2px;top:372.1px;color:#aca899;letter-spacing:-0.178px;">3D график</div>
<div style="left:889.0px;top:369.9px;width:15.600000000000023px;height:17.700000000000045px;background:#f0eee4;border-radius:2px"><svg style="left:4px;top:6px" width="9" height="7" viewBox="0 0 9 7"><path d="M1 1l3.5 4L8 1" fill="none" stroke="#c0bcaa" stroke-width="2"/></svg></div>
<div style="left:673.7px;top:394.2px;width:175.69999999999993px;height:33.30000000000001px;border:1px solid #fff;border-right-color:#cfcbbb;border-bottom-color:#cfcbbb;background:#efecdd"></div>
<div style="left:685.9px;top:401.7px;width:76.30000000000007px;height:19.5px;background:linear-gradient(#fff,#f4f3ee 70%,#dcd8cc);border:1px solid #003c74;border-radius:3px"></div>
<div class="t" style="left:685.9px;top:404.5px;width:76.30000000000007px;text-align:center">Ок</div>
<div style="left:769.7px;top:401.7px;width:73.59999999999991px;height:19.5px;background:linear-gradient(#fff,#f4f3ee 70%,#dcd8cc);border:1px solid #003c74;border-radius:3px"></div>
<div class="t" style="left:769.7px;top:404.5px;width:73.59999999999991px;text-align:center">Отмена</div>
<div style="left:260.1px;top:394.2px;width:394.9px;height:33.30000000000001px;border:1px solid #fff;border-right-color:#cfcbbb;border-bottom-color:#cfcbbb;background:#efecdd"></div>
<div class="t" style="left:264.9px;top:404.5px;color:#aca899;letter-spacing:0.038px;">Адрес (hex)</div>
<div style="left:332.5px;top:401.0px;width:148.7px;height:20.399999999999977px;background:#fff;border:1px solid #b4bfb6"></div>
<div style="left:464.2px;top:403.0px;width:15px;height:16.399999999999977px;background:#f0eee4"><svg style="left:4px;top:2px" width="7" height="13" viewBox="0 0 7 13"><path d="M1 4.5L3.5 2 6 4.5M1 8.5L3.5 11 6 8.5" fill="none" stroke="#c0bcaa" stroke-width="1.4"/></svg></div>
<div style="left:508.7px;top:401.0px;width:56.400000000000034px;height:20.399999999999977px;background:#fff;border:1px solid #b4bfb6"></div>
<div class="t" style="left:512.7px;top:404.5px;color:#aca899">17</div>
<div style="left:548.1px;top:403.0px;width:15px;height:16.399999999999977px;background:#f0eee4"><svg style="left:4px;top:2px" width="7" height="13" viewBox="0 0 7 13"><path d="M1 4.5L3.5 2 6 4.5M1 8.5L3.5 11 6 8.5" fill="none" stroke="#c0bcaa" stroke-width="1.4"/></svg></div>
<div style="left:591.3px;top:401.0px;width:56.90000000000009px;height:20.399999999999977px;background:#fff;border:1px solid #b4bfb6"></div>
<div class="t" style="left:595.3px;top:404.5px;color:#aca899">12</div>
<div style="left:631.2px;top:403.0px;width:15px;height:16.399999999999977px;background:#f0eee4"><svg style="left:4px;top:2px" width="7" height="13" viewBox="0 0 7 13"><path d="M1 4.5L3.5 2 6 4.5M1 8.5L3.5 11 6 8.5" fill="none" stroke="#c0bcaa" stroke-width="1.4"/></svg></div>
<div class="t" style="left:486.8px;top:404.5px;color:#aca899">X=</div>
<div class="t" style="left:569.9px;top:404.5px;color:#aca899">Z=</div>
<div style="left:232px;top:447.9px;width:925px;height:665.1999999999999px;background:#fcfcfe;border:1px solid #919b9c"></div>
<div style="left:235.7px;top:433.1px;width:57.19999999999999px;height:14.799999999999955px;background:linear-gradient(#fdfdfb,#f0eee4);border:1px solid #919b9c;border-bottom:none;border-radius:3px 3px 0 0"></div>
<div class="t" style="left:235.7px;top:433.4px;width:57.19999999999999px;text-align:center">Изолинии</div>
<div style="left:373.1px;top:433.1px;width:52.69999999999999px;height:14.799999999999955px;background:linear-gradient(#fdfdfb,#f0eee4);border:1px solid #919b9c;border-bottom:none;border-radius:3px 3px 0 0"></div>
<div class="t" style="left:373.1px;top:433.4px;width:52.69999999999999px;text-align:center">Матрица</div>
<div style="left:292.9px;top:427.3px;width:80.20000000000005px;height:23.0px;background:#fcfcfe;border:1px solid #919b9c;border-bottom:none;border-top:3px solid #f8b040;border-radius:3px 3px 0 0"></div>
<div class="t" style="left:292.9px;top:431.0px;width:80.20000000000005px;text-align:center">Поверхность</div>
<div style="left:236.5px;top:452.8px;width:917.4000000000001px;height:655.9000000000001px;background:#808080"></div>
<svg style="left:0;top:0;font-family:'Liberation Sans',sans-serif" width="1920" height="1200" viewBox="0 0 790 493.75"><polygon points="200.60,401.10 286.20,348.40 286.20,214.60 200.60,266.40" fill="#a9c9f1"/><polygon points="371.60,375.00 286.20,348.40 286.20,214.60 371.60,239.30" fill="#a9c9f1"/><polygon points="286.00,427.70 371.60,375.00 286.20,348.40 200.60,401.10" fill="#a9c9f1"/><path d="M286.00 427.70L200.60 401.10M291.35 424.41L205.95 397.81M296.70 421.11L211.30 394.51M302.05 417.82L216.65 391.22M307.40 414.52L222.00 387.92M312.75 411.23L227.35 384.63M318.10 407.94L232.70 381.34M323.45 404.64L238.05 378.04M328.80 401.35L243.40 374.75M334.15 398.06L248.75 371.46M339.50 394.76L254.10 368.16M344.85 391.47L259.45 364.87M350.20 388.17L264.80 361.57M355.55 384.88L270.15 358.28M360.90 381.59L275.50 354.99M366.25 378.29L280.85 351.69M371.60 375.00L286.20 348.40M286.00 427.70L371.60 375.00M278.24 425.28L363.84 372.58M270.47 422.86L356.07 370.16M262.71 420.45L348.31 367.75M254.95 418.03L340.55 365.33M247.18 415.61L332.78 362.91M239.42 413.19L325.02 360.49M231.65 410.77L317.25 358.07M223.89 408.35L309.49 355.65M216.13 405.94L301.73 353.24M208.36 403.52L293.96 350.82M200.60 401.10L286.20 348.40M200.60 401.10L286.20 348.40L371.60 375.00M200.60 392.68L286.20 340.04L371.60 366.52M200.60 384.26L286.20 331.67L371.60 358.04M200.60 375.84L286.20 323.31L371.60 349.56M200.60 367.42L286.20 314.95L371.60 341.07M200.60 359.01L286.20 306.59L371.60 332.59M200.60 350.59L286.20 298.22L371.60 324.11M200.60 342.17L286.20 289.86L371.60 315.63M200.60 333.75L286.20 281.50L371.60 307.15M200.60 325.33L286.20 273.14L371.60 298.67M200.60 316.91L286.20 264.77L371.60 290.19M200.60 308.49L286.20 256.41L371.60 281.71M200.60 300.07L286.20 248.05L371.60 273.23M200.60 291.66L286.20 239.69L371.60 264.74M200.60 283.24L286.20 231.32L371.60 256.26M200.60 274.82L286.20 222.96L371.60 247.78M200.60 266.40L286.20 214.60L371.60 239.30" fill="none" stroke="#fff" stroke-opacity=".8" stroke-width=".42"/><path d="M200.60 401.10L200.60 266.40M205.95 397.81L205.95 263.16M211.30 394.51L211.30 259.93M216.65 391.22L216.65 256.69M222.00 387.92L222.00 253.45M227.35 384.63L227.35 250.21M232.70 381.34L232.70 246.97M238.05 378.04L238.05 243.74M243.40 374.75L243.40 240.50M248.75 371.46L248.75 237.26M254.10 368.16L254.10 234.02M259.45 364.87L259.45 230.79M264.80 361.57L264.80 227.55M270.15 358.28L270.15 224.31M275.50 354.99L275.50 221.07M280.85 351.69L280.85 217.84M286.20 348.40L286.20 214.60M371.60 375.00L371.60 239.30M363.84 372.58L363.84 237.05M356.07 370.16L356.07 234.81M348.31 367.75L348.31 232.56M340.55 365.33L340.55 230.32M332.78 362.91L332.78 228.07M325.02 360.49L325.02 225.83M317.25 358.07L317.25 223.58M309.49 355.65L309.49 221.34M301.73 353.24L301.73 219.09M293.96 350.82L293.96 216.85M286.20 348.40L286.20 214.60" fill="none" stroke="#fff" stroke-opacity=".45" stroke-width=".42"/><path d="M286.20 348.40L286.20 214.60" stroke="#9a9a9a" stroke-width="0.45" fill="none"/><path d="M286.20 348.40L200.60 401.10" stroke="#9a9a9a" stroke-width="0.45" fill="none"/><path d="M286.20 348.40L371.60 375.00" stroke="#9a9a9a" stroke-width="0.45" fill="none"/><polygon points="288.61,265.73 293.96,259.32 286.20,254.74 280.85,261.17" fill="#ffe900" stroke="#000" stroke-opacity=".9" stroke-width=".38" stroke-linejoin="round"/><polygon points="283.26,271.41 288.61,265.73 280.85,261.17 275.50,266.88" fill="#fff300" stroke="#000" stroke-opacity=".9" stroke-width=".38" stroke-linejoin="round"/><polygon points="296.38,270.30 301.73,263.91 293.96,259.32 288.61,265.73" fill="#fff200" stroke="#000" stroke-opacity=".9" stroke-width=".38" stroke-linejoin="round"/><polygon points="277.91,275.99 283.26,271.41 275.50,266.88 270.15,271.49" fill="#fffa00" stroke="#000" stroke-opacity=".9" stroke-width=".38" stroke-linejoin="round"/><polygon points="291.03,275.96 296.38,270.30 288.61,265.73 283.26,271.41" fill="#fffc00" stroke="#000" stroke-opacity=".9" stroke-width=".38" stroke-linejoin="round"/><polygon points="304.14,274.98 309.49,268.58 301.73,263.91 296.38,270.30" fill="#fffa00" stroke="#000" stroke-opacity=".9" stroke-width=".38" stroke-linejoin="round"/><polygon points="272.56,280.58 277.91,275.99 270.15,271.49 264.80,276.11" fill="#fdff00" stroke="#000" stroke-opacity=".9" stroke-width=".38" stroke-linejoin="round"/><polygon points="285.68,280.54 291.03,275.96 283.26,271.41 277.91,275.99" fill="#f6ff00" stroke="#000" stroke-opacity=".9" stroke-width=".38" stroke-linejoin="round"/><polygon points="298.79,280.67 304.14,274.98 296.38,270.30 291.03,275.96" fill="#f3ff00" stroke="#000" stroke-opacity=".9" stroke-width=".38" stroke-linejoin="round"/><polygon points="267.21,285.18 272.56,280.58 264.80,276.11 259.45,280.73" fill="#f3ff00" stroke="#000" stroke-opacity=".9" stroke-width=".38" stroke-linejoin="round"/><polygon points="311.90,280.10 317.25,273.60 309.49,268.58 304.14,274.98" fill="#f5ff00" stroke="#000" stroke-opacity=".9" stroke-width=".38" stroke-linejoin="round"/><polygon points="280.33,285.14 285.68,280.54 277.91,275.99 272.56,280.58" fill="#ecff00" stroke="#000" stroke-opacity=".9" stroke-width=".38" stroke-linejoin="round"/><polygon points="293.44,285.33 298.79,280.67 291.03,275.96 285.68,280.54" fill="#e4ff00" stroke="#000" stroke-opacity=".9" stroke-width=".38" stroke-linejoin="round"/><polygon points="261.86,289.78 267.21,285.18 259.45,280.73 254.10,285.35" fill="#e8ff00" stroke="#000" stroke-opacity=".9" stroke-width=".38" stroke-linejoin="round"/><polygon points="306.55,285.99 311.90,280.10 304.14,274.98 298.79,280.67" fill="#dfff00" stroke="#000" stroke-opacity=".9" stroke-width=".38" stroke-linejoin="round"/><polygon points="274.98,289.75 280.33,285.14 272.56,280.58 267.21,285.18" fill="#e2ff00" stroke="#000" stroke-opacity=".9" stroke-width=".38" stroke-linejoin="round"/><polygon points="319.67,286.48 325.02,279.81 317.25,273.60 311.90,280.10" fill="#dbff00" stroke="#000" stroke-opacity=".9" stroke-width=".38" stroke-linejoin="round"/><polygon points="288.09,290.08 293.44,285.33 285.68,280.54 280.33,285.14" fill="#daff00" stroke="#000" stroke-opacity=".9" stroke-width=".38" stroke-linejoin="round"/><polygon points="256.51,293.35 261.86,289.78 254.10,285.35 248.75,288.92" fill="#e2ff00" stroke="#000" stroke-opacity=".9" stroke-width=".38" stroke-linejoin="round"/><polygon points="301.20,291.07 306.55,285.99 298.79,280.67 293.44,285.33" fill="#cfff00" stroke="#000" stroke-opacity=".9" stroke-width=".38" stroke-linejoin="round"/><polygon points="269.63,294.40 274.98,289.75 267.21,285.18 261.86,289.78" fill="#d8ff00" stroke="#000" stroke-opacity=".9" stroke-width=".38" stroke-linejoin="round"/><polygon points="314.32,292.60 319.67,286.48 311.90,280.10 306.55,285.99" fill="#c4ff00" stroke="#000" stroke-opacity=".9" stroke-width=".38" stroke-linejoin="round"/><polygon points="282.74,294.88 288.09,290.08 280.33,285.14 274.98,289.75" fill="#cfff00" stroke="#000" stroke-opacity=".9" stroke-width=".38" stroke-linejoin="round"/><polygon points="251.16,296.75 256.51,293.35 248.75,288.92 243.40,292.31" fill="#e0ff00" stroke="#000" stroke-opacity=".9" stroke-width=".38" stroke-linejoin="round"/><polygon points="327.43,292.90 332.78,287.01 325.02,279.81 319.67,286.48" fill="#baff00" stroke="#000" stroke-opacity=".9" stroke-width=".38" stroke-linejoin="round"/><polygon points="295.85,296.39 301.20,291.07 293.44,285.33 288.09,290.08" fill="#c2ff00" stroke="#000" stroke-opacity=".9" stroke-width=".38" stroke-linejoin="round"/><polygon points="264.28,298.06 269.63,294.40 261.86,289.78 256.51,293.35" fill="#d1ff00" stroke="#000" stroke-opacity=".9" stroke-width=".38" stroke-linejoin="round"/><polygon points="308.97,298.12 314.32,292.60 306.55,285.99 301.20,291.07" fill="#b1ff00" stroke="#000" stroke-opacity=".9" stroke-width=".38" stroke-linejoin="round"/><polygon points="277.39,299.79 282.74,294.88 274.98,289.75 269.63,294.40" fill="#c4ff00" stroke="#000" stroke-opacity=".9" stroke-width=".38" stroke-linejoin="round"/><polygon points="245.81,300.18 251.16,296.75 243.40,292.31 238.05,295.71" fill="#dfff00" stroke="#000" stroke-opacity=".9" stroke-width=".38" stroke-linejoin="round"/><polygon points="322.08,298.24 327.43,292.90 319.67,286.48 314.32,292.60" fill="#a6ff00" stroke="#000" stroke-opacity=".9" stroke-width=".38" stroke-linejoin="round"/><polygon points="290.50,301.63 295.85,296.39 288.09,290.08 282.74,294.88" fill="#b4ff00" stroke="#000" stroke-opacity=".9" stroke-width=".38" stroke-linejoin="round"/><polygon points="258.93,301.64 264.28,298.06 256.51,293.35 251.16,296.75" fill="#cfff00" stroke="#000" stroke-opacity=".9" stroke-width=".38" stroke-linejoin="round"/><polygon points="335.20,297.09 340.55,292.25 332.78,287.01 327.43,292.90" fill="#a0ff00" stroke="#000" stroke-opacity=".9" stroke-width=".38" stroke-linejoin="round"/><polygon points="303.62,303.63 308.97,298.12 301.20,291.07 295.85,296.39" fill="#a1ff00" stroke="#000" stroke-opacity=".9" stroke-width=".38" stroke-linejoin="round"/><polygon points="272.04,303.94 277.39,299.79 269.63,294.40 264.28,298.06" fill="#bbff00" stroke="#000" stroke-opacity=".9" stroke-width=".38" stroke-linejoin="round"/><polygon points="240.46,303.66 245.81,300.18 238.05,295.71 232.70,299.12" fill="#deff00" stroke="#000" stroke-opacity=".9" stroke-width=".38" stroke-linejoin="round"/><polygon points="316.73,303.19 322.08,298.24 314.32,292.60 308.97,298.12" fill="#95ff00" stroke="#000" stroke-opacity=".9" stroke-width=".38" stroke-linejoin="round"/><polygon points="285.15,306.89 290.50,301.63 282.74,294.88 277.39,299.79" fill="#a7ff00" stroke="#000" stroke-opacity=".9" stroke-width=".38" stroke-linejoin="round"/><polygon points="253.58,305.34 258.93,301.64 251.16,296.75 245.81,300.18" fill="#cdff00" stroke="#000" stroke-opacity=".9" stroke-width=".38" stroke-linejoin="round"/><polygon points="329.85,301.72 335.20,297.09 327.43,292.90 322.08,298.24" fill="#92ff00" stroke="#000" stroke-opacity=".9" stroke-width=".38" stroke-linejoin="round"/><polygon points="298.27,308.33 303.62,303.63 295.85,296.39 290.50,301.63" fill="#93ff00" stroke="#000" stroke-opacity=".9" stroke-width=".38" stroke-linejoin="round"/><polygon points="266.69,308.16 272.04,303.94 264.28,298.06 258.93,301.64" fill="#b6ff00" stroke="#000" stroke-opacity=".9" stroke-width=".38" stroke-linejoin="round"/><polygon points="235.11,307.21 240.46,303.66 232.70,299.12 227.35,302.55" fill="#dcff00" stroke="#000" stroke-opacity=".9" stroke-width=".38" stroke-linejoin="round"/><polygon points="342.96,300.32 348.31,295.98 340.55,292.25 335.20,297.09" fill="#93ff00" stroke="#000" stroke-opacity=".9" stroke-width=".38" stroke-linejoin="round"/><polygon points="311.38,307.99 316.73,303.19 308.97,298.12 303.62,303.63" fill="#86ff00" stroke="#000" stroke-opacity=".9" stroke-width=".38" stroke-linejoin="round"/><polygon points="279.80,311.57 285.15,306.89 277.39,299.79 272.04,303.94" fill="#9bff00" stroke="#000" stroke-opacity=".9" stroke-width=".38" stroke-linejoin="round"/><polygon points="248.23,309.23 253.58,305.34 245.81,300.18 240.46,303.66" fill="#caff00" stroke="#000" stroke-opacity=".9" stroke-width=".38" stroke-linejoin="round"/><polygon points="324.50,306.21 329.85,301.72 322.08,298.24 316.73,303.19" fill="#86ff00" stroke="#000" stroke-opacity=".9" stroke-width=".38" stroke-linejoin="round"/><polygon points="292.92,312.79 298.27,308.33 290.50,301.63 285.15,306.89" fill="#86ff00" stroke="#000" stroke-opacity=".9" stroke-width=".38" stroke-linejoin="round"/><polygon points="261.34,312.61 266.69,308.16 258.93,301.64 253.58,305.34" fill="#b1ff00" stroke="#000" stroke-opacity=".9" stroke-width=".38" stroke-linejoin="round"/><polygon points="229.76,310.85 235.11,307.21 227.35,302.55 222.00,305.99" fill="#daff00" stroke="#000" stroke-opacity=".9" stroke-width=".38" stroke-linejoin="round"/><polygon points="337.61,304.57 342.96,300.32 335.20,297.09 329.85,301.72" fill="#89ff00" stroke="#000" stroke-opacity=".9" stroke-width=".38" stroke-linejoin="round"/><polygon points="306.03,311.99 311.38,307.99 303.62,303.63 298.27,308.33" fill="#7bff00" stroke="#000" stroke-opacity=".9" stroke-width=".38" stroke-linejoin="round"/><polygon points="274.45,315.98 279.80,311.57 272.04,303.94 266.69,308.16" fill="#93ff00" stroke="#000" stroke-opacity=".9" stroke-width=".38" stroke-linejoin="round"/><polygon points="242.88,313.36 248.23,309.23 240.46,303.66 235.11,307.21" fill="#c6ff00" stroke="#000" stroke-opacity=".9" stroke-width=".38" stroke-linejoin="round"/><polygon points="350.72,303.39 356.07,299.40 348.31,295.98 342.96,300.32" fill="#8bff00" stroke="#000" stroke-opacity=".9" stroke-width=".38" stroke-linejoin="round"/><polygon points="319.15,310.61 324.50,306.21 316.73,303.19 311.38,307.99" fill="#7bff00" stroke="#000" stroke-opacity=".9" stroke-width=".38" stroke-linejoin="round"/><polygon points="287.57,316.91 292.92,312.79 285.15,306.89 279.80,311.57" fill="#7cff00" stroke="#000" stroke-opacity=".9" stroke-width=".38" stroke-linejoin="round"/><polygon points="255.99,317.27 261.34,312.61 253.58,305.34 248.23,309.23" fill="#aaff00" stroke="#000" stroke-opacity=".9" stroke-width=".38" stroke-linejoin="round"/><polygon points="224.41,314.49 229.76,310.85 222.00,305.99 216.65,309.32" fill="#d8ff00" stroke="#000" stroke-opacity=".9" stroke-width=".38" stroke-linejoin="round"/><polygon points="332.26,308.77 337.61,304.57 329.85,301.72 324.50,306.21" fill="#81ff00" stroke="#000" stroke-opacity=".9" stroke-width=".38" stroke-linejoin="round"/><polygon points="300.68,315.90 306.03,311.99 298.27,308.33 292.92,312.79" fill="#73ff00" stroke="#000" stroke-opacity=".9" stroke-width=".38" stroke-linejoin="round"/><polygon points="269.10,320.21 274.45,315.98 266.69,308.16 261.34,312.61" fill="#8bff00" stroke="#000" stroke-opacity=".9" stroke-width=".38" stroke-linejoin="round"/><polygon points="237.53,317.77 242.88,313.36 235.11,307.21 229.76,310.85" fill="#c1ff00" stroke="#000" stroke-opacity=".9" stroke-width=".38" stroke-linejoin="round"/><polygon points="345.37,307.35 350.72,303.39 342.96,300.32 337.61,304.57" fill="#84ff00" stroke="#000" stroke-opacity=".9" stroke-width=".38" stroke-linejoin="round"/><polygon points="313.80,314.42 319.15,310.61 311.38,307.99 306.03,311.99" fill="#73ff00" stroke="#000" stroke-opacity=".9" stroke-width=".38" stroke-linejoin="round"/><polygon points="282.22,320.64 287.57,316.91 279.80,311.57 274.45,315.98" fill="#74ff00" stroke="#000" stroke-opacity=".9" stroke-width=".38" stroke-linejoin="round"/><polygon points="250.64,321.97 255.99,317.27 248.23,309.23 242.88,313.36" fill="#a2ff00" stroke="#000" stroke-opacity=".9" stroke-width=".38" stroke-linejoin="round"/><polygon points="219.06,318.02 224.41,314.49 216.65,309.32 211.30,312.53" fill="#d7ff00" stroke="#000" stroke-opacity=".9" stroke-width=".38" stroke-linejoin="round"/><polygon points="358.49,306.45 363.84,302.78 356.07,299.40 350.72,303.39" fill="#84ff00" stroke="#000" stroke-opacity=".9" stroke-width=".38" stroke-linejoin="round"/><polygon points="326.91,312.91 332.26,308.77 324.50,306.21 319.15,310.61" fill="#79ff00" stroke="#000" stroke-opacity=".9" stroke-width=".38" stroke-linejoin="round"/><polygon points="295.33,319.73 300.68,315.90 292.92,312.79 287.57,316.91" fill="#6dff00" stroke="#000" stroke-opacity=".9" stroke-width=".38" stroke-linejoin="round"/><polygon points="263.75,324.27 269.10,320.21 261.34,312.61 255.99,317.27" fill="#83ff00" stroke="#000" stroke-opacity=".9" stroke-width=".38" stroke-linejoin="round"/><polygon points="232.18,322.24 237.53,317.77 229.76,310.85 224.41,314.49" fill="#bbff00" stroke="#000" stroke-opacity=".9" stroke-width=".38" stroke-linejoin="round"/><polygon points="340.02,311.27 345.37,307.35 337.61,304.57 332.26,308.77" fill="#7eff00" stroke="#000" stroke-opacity=".9" stroke-width=".38" stroke-linejoin="round"/><polygon points="308.45,318.20 313.80,314.42 306.03,311.99 300.68,315.90" fill="#6fff00" stroke="#000" stroke-opacity=".9" stroke-width=".38" stroke-linejoin="round"/><polygon points="276.87,324.21 282.22,320.64 274.45,315.98 269.10,320.21" fill="#6fff00" stroke="#000" stroke-opacity=".9" stroke-width=".38" stroke-linejoin="round"/><polygon points="245.29,326.58 250.64,321.97 242.88,313.36 237.53,317.77" fill="#99ff00" stroke="#000" stroke-opacity=".9" stroke-width=".38" stroke-linejoin="round"/><polygon points="213.71,321.31 219.06,318.02 211.30,312.53 205.95,315.71" fill="#d7ff00" stroke="#000" stroke-opacity=".9" stroke-width=".38" stroke-linejoin="round"/><polygon points="353.14,310.11 358.49,306.45 350.72,303.39 345.37,307.35" fill="#80ff00" stroke="#000" stroke-opacity=".9" stroke-width=".38" stroke-linejoin="round"/><polygon points="321.56,316.66 326.91,312.91 319.15,310.61 313.80,314.42" fill="#73ff00" stroke="#000" stroke-opacity=".9" stroke-width=".38" stroke-linejoin="round"/><polygon points="289.98,323.22 295.33,319.73 287.57,316.91 282.22,320.64" fill="#69ff00" stroke="#000" stroke-opacity=".9" stroke-width=".38" stroke-linejoin="round"/><polygon points="258.40,328.14 263.75,324.27 255.99,317.27 250.64,321.97" fill="#7bff00" stroke="#000" stroke-opacity=".9" stroke-width=".38" stroke-linejoin="round"/><polygon points="226.83,326.12 232.18,322.24 224.41,314.49 219.06,318.02" fill="#b6ff00" stroke="#000" stroke-opacity=".9" stroke-width=".38" stroke-linejoin="round"/><polygon points="366.25,299.98 371.60,296.97 363.84,302.78 358.49,306.45" fill="#a1ff00" stroke="#000" stroke-opacity=".9" stroke-width=".38" stroke-linejoin="round"/><polygon points="334.67,315.18 340.02,311.27 332.26,308.77 326.91,312.91" fill="#78ff00" stroke="#000" stroke-opacity=".9" stroke-width=".38" stroke-linejoin="round"/><polygon points="303.10,321.97 308.45,318.20 300.68,315.90 295.33,319.73" fill="#6bff00" stroke="#000" stroke-opacity=".9" stroke-width=".38" stroke-linejoin="round"/><polygon points="271.52,327.70 276.87,324.21 269.10,320.21 263.75,324.27" fill="#6bff00" stroke="#000" stroke-opacity=".9" stroke-width=".38" stroke-linejoin="round"/><polygon points="239.94,330.70 245.29,326.58 237.53,317.77 232.18,322.24" fill="#90ff00" stroke="#000" stroke-opacity=".9" stroke-width=".38" stroke-linejoin="round"/><polygon points="208.36,324.36 213.71,321.31 205.95,315.71 200.60,318.87" fill="#d8ff00" stroke="#000" stroke-opacity=".9" stroke-width=".38" stroke-linejoin="round"/><polygon points="347.79,313.78 353.14,310.11 345.37,307.35 340.02,311.27" fill="#7cff00" stroke="#000" stroke-opacity=".9" stroke-width=".38" stroke-linejoin="round"/><polygon points="316.21,320.40 321.56,316.66 313.80,314.42 308.45,318.20" fill="#6fff00" stroke="#000" stroke-opacity=".9" stroke-width=".38" stroke-linejoin="round"/><polygon points="284.63,326.61 289.98,323.22 282.22,320.64 276.87,324.21" fill="#67ff00" stroke="#000" stroke-opacity=".9" stroke-width=".38" stroke-linejoin="round"/><polygon points="253.05,331.84 258.40,328.14 250.64,321.97 245.29,326.58" fill="#73ff00" stroke="#000" stroke-opacity=".9" stroke-width=".38" stroke-linejoin="round"/><polygon points="221.48,328.69 226.83,326.12 219.06,318.02 213.71,321.31" fill="#b6ff00" stroke="#000" stroke-opacity=".9" stroke-width=".38" stroke-linejoin="round"/><polygon points="360.90,303.32 366.25,299.98 358.49,306.45 353.14,310.11" fill="#a0ff00" stroke="#000" stroke-opacity=".9" stroke-width=".38" stroke-linejoin="round"/><polygon points="329.32,318.88 334.67,315.18 326.91,312.91 321.56,316.66" fill="#74ff00" stroke="#000" stroke-opacity=".9" stroke-width=".38" stroke-linejoin="round"/><polygon points="297.75,325.41 303.10,321.97 295.33,319.73 289.98,323.22" fill="#68ff00" stroke="#000" stroke-opacity=".9" stroke-width=".38" stroke-linejoin="round"/><polygon points="266.17,331.13 271.52,327.70 263.75,324.27 258.40,328.14" fill="#67ff00" stroke="#000" stroke-opacity=".9" stroke-width=".38" stroke-linejoin="round"/><polygon points="234.59,333.31 239.94,330.70 232.18,322.24 226.83,326.12" fill="#8cff00" stroke="#000" stroke-opacity=".9" stroke-width=".38" stroke-linejoin="round"/><polygon points="342.44,317.44 347.79,313.78 340.02,311.27 334.67,315.18" fill="#78ff00" stroke="#000" stroke-opacity=".9" stroke-width=".38" stroke-linejoin="round"/><polygon points="310.86,324.13 316.21,320.40 308.45,318.20 303.10,321.97" fill="#6bff00" stroke="#000" stroke-opacity=".9" stroke-width=".38" stroke-linejoin="round"/><polygon points="279.28,329.98 284.63,326.61 276.87,324.21 271.52,327.70" fill="#65ff00" stroke="#000" stroke-opacity=".9" stroke-width=".38" stroke-linejoin="round"/><polygon points="247.70,335.08 253.05,331.84 245.29,326.58 239.94,330.70" fill="#6eff00" stroke="#000" stroke-opacity=".9" stroke-width=".38" stroke-linejoin="round"/><polygon points="216.13,330.51 221.48,328.69 213.71,321.31 208.36,324.36" fill="#baff00" stroke="#000" stroke-opacity=".9" stroke-width=".38" stroke-linejoin="round"/><polygon points="355.55,307.15 360.90,303.32 353.14,310.11 347.79,313.78" fill="#9dff00" stroke="#000" stroke-opacity=".9" stroke-width=".38" stroke-linejoin="round"/><polygon points="323.97,322.58 329.32,318.88 321.56,316.66 316.21,320.40" fill="#70ff00" stroke="#000" stroke-opacity=".9" stroke-width=".38" stroke-linejoin="round"/><polygon points="292.40,328.75 297.75,325.41 289.98,323.22 284.63,326.61" fill="#67ff00" stroke="#000" stroke-opacity=".9" stroke-width=".38" stroke-linejoin="round"/><polygon points="260.82,334.51 266.17,331.13 258.40,328.14 253.05,331.84" fill="#65ff00" stroke="#000" stroke-opacity=".9" stroke-width=".38" stroke-linejoin="round"/><polygon points="229.24,334.14 234.59,333.31 226.83,326.12 221.48,328.69" fill="#92ff00" stroke="#000" stroke-opacity=".9" stroke-width=".38" stroke-linejoin="round"/><polygon points="337.09,321.10 342.44,317.44 334.67,315.18 329.32,318.88" fill="#74ff00" stroke="#000" stroke-opacity=".9" stroke-width=".38" stroke-linejoin="round"/><polygon points="305.51,327.53 310.86,324.13 303.10,321.97 297.75,325.41" fill="#69ff00" stroke="#000" stroke-opacity=".9" stroke-width=".38" stroke-linejoin="round"/><polygon points="273.93,333.33 279.28,329.98 271.52,327.70 266.17,331.13" fill="#64ff00" stroke="#000" stroke-opacity=".9" stroke-width=".38" stroke-linejoin="round"/><polygon points="242.35,336.81 247.70,335.08 239.94,330.70 234.59,333.31" fill="#71ff00" stroke="#000" stroke-opacity=".9" stroke-width=".38" stroke-linejoin="round"/><polygon points="350.20,310.98 355.55,307.15 347.79,313.78 342.44,317.44" fill="#99ff00" stroke="#000" stroke-opacity=".9" stroke-width=".38" stroke-linejoin="round"/><polygon points="318.62,326.28 323.97,322.58 316.21,320.40 310.86,324.13" fill="#6dff00" stroke="#000" stroke-opacity=".9" stroke-width=".38" stroke-linejoin="round"/><polygon points="287.05,332.08 292.40,328.75 284.63,326.61 279.28,329.98" fill="#66ff00" stroke="#000" stroke-opacity=".9" stroke-width=".38" stroke-linejoin="round"/><polygon points="255.47,337.53 260.82,334.51 253.05,331.84 247.70,335.08" fill="#64ff00" stroke="#000" stroke-opacity=".9" stroke-width=".38" stroke-linejoin="round"/><polygon points="223.89,334.63 229.24,334.14 221.48,328.69 216.13,330.51" fill="#a0ff00" stroke="#000" stroke-opacity=".9" stroke-width=".38" stroke-linejoin="round"/><polygon points="331.74,324.77 337.09,321.10 329.32,318.88 323.97,322.58" fill="#71ff00" stroke="#000" stroke-opacity=".9" stroke-width=".38" stroke-linejoin="round"/><polygon points="300.16,330.85 305.51,327.53 297.75,325.41 292.40,328.75" fill="#68ff00" stroke="#000" stroke-opacity=".9" stroke-width=".38" stroke-linejoin="round"/><polygon points="268.58,336.65 273.93,333.33 266.17,331.13 260.82,334.51" fill="#63ff00" stroke="#000" stroke-opacity=".9" stroke-width=".38" stroke-linejoin="round"/><polygon points="237.00,337.13 242.35,336.81 234.59,333.31 229.24,334.14" fill="#7fff00" stroke="#000" stroke-opacity=".9" stroke-width=".38" stroke-linejoin="round"/><polygon points="344.85,314.82 350.20,310.98 342.44,317.44 337.09,321.10" fill="#96ff00" stroke="#000" stroke-opacity=".9" stroke-width=".38" stroke-linejoin="round"/><polygon points="313.27,329.66 318.62,326.28 310.86,324.13 305.51,327.53" fill="#6bff00" stroke="#000" stroke-opacity=".9" stroke-width=".38" stroke-linejoin="round"/><polygon points="281.70,335.40 287.05,332.08 279.28,329.98 273.93,333.33" fill="#66ff00" stroke="#000" stroke-opacity=".9" stroke-width=".38" stroke-linejoin="round"/><polygon points="250.12,339.09 255.47,337.53 247.70,335.08 242.35,336.81" fill="#6bff00" stroke="#000" stroke-opacity=".9" stroke-width=".38" stroke-linejoin="round"/><polygon points="326.39,328.43 331.74,324.77 323.97,322.58 318.62,326.28" fill="#6eff00" stroke="#000" stroke-opacity=".9" stroke-width=".38" stroke-linejoin="round"/><polygon points="294.81,334.16 300.16,330.85 292.40,328.75 287.05,332.08" fill="#68ff00" stroke="#000" stroke-opacity=".9" stroke-width=".38" stroke-linejoin="round"/><polygon points="263.23,339.62 268.58,336.65 260.82,334.51 255.47,337.53" fill="#64ff00" stroke="#000" stroke-opacity=".9" stroke-width=".38" stroke-linejoin="round"/><polygon points="231.65,337.43 237.00,337.13 229.24,334.14 223.89,334.63" fill="#95ff00" stroke="#000" stroke-opacity=".9" stroke-width=".38" stroke-linejoin="round"/><polygon points="339.50,318.65 344.85,314.82 337.09,321.10 331.74,324.77" fill="#92ff00" stroke="#000" stroke-opacity=".9" stroke-width=".38" stroke-linejoin="round"/><polygon points="307.92,332.95 313.27,329.66 305.51,327.53 300.16,330.85" fill="#6aff00" stroke="#000" stroke-opacity=".9" stroke-width=".38" stroke-linejoin="round"/><polygon points="276.35,338.71 281.70,335.40 273.93,333.33 268.58,336.65" fill="#65ff00" stroke="#000" stroke-opacity=".9" stroke-width=".38" stroke-linejoin="round"/><polygon points="244.77,339.52 250.12,339.09 242.35,336.81 237.00,337.13" fill="#7cff00" stroke="#000" stroke-opacity=".9" stroke-width=".38" stroke-linejoin="round"/><polygon points="321.04,331.78 326.39,328.43 318.62,326.28 313.27,329.66" fill="#6cff00" stroke="#000" stroke-opacity=".9" stroke-width=".38" stroke-linejoin="round"/><polygon points="289.46,337.47 294.81,334.16 287.05,332.08 281.70,335.40" fill="#67ff00" stroke="#000" stroke-opacity=".9" stroke-width=".38" stroke-linejoin="round"/><polygon points="257.88,341.17 263.23,339.62 255.47,337.53 250.12,339.09" fill="#6cff00" stroke="#000" stroke-opacity=".9" stroke-width=".38" stroke-linejoin="round"/><polygon points="334.15,328.87 339.50,318.65 331.74,324.77 326.39,328.43" fill="#82ff00" stroke="#000" stroke-opacity=".9" stroke-width=".38" stroke-linejoin="round"/><polygon points="302.57,336.24 307.92,332.95 300.16,330.85 294.81,334.16" fill="#6aff00" stroke="#000" stroke-opacity=".9" stroke-width=".38" stroke-linejoin="round"/><polygon points="271.00,341.67 276.35,338.71 268.58,336.65 263.23,339.62" fill="#66ff00" stroke="#000" stroke-opacity=".9" stroke-width=".38" stroke-linejoin="round"/><polygon points="239.42,339.99 244.77,339.52 237.00,337.13 231.65,337.43" fill="#92ff00" stroke="#000" stroke-opacity=".9" stroke-width=".38" stroke-linejoin="round"/><polygon points="315.69,335.05 321.04,331.78 313.27,329.66 307.92,332.95" fill="#6cff00" stroke="#000" stroke-opacity=".9" stroke-width=".38" stroke-linejoin="round"/><polygon points="284.11,340.76 289.46,337.47 281.70,335.40 276.35,338.71" fill="#67ff00" stroke="#000" stroke-opacity=".9" stroke-width=".38" stroke-linejoin="round"/><polygon points="252.53,341.83 257.88,341.17 250.12,339.09 244.77,339.52" fill="#7cff00" stroke="#000" stroke-opacity=".9" stroke-width=".38" stroke-linejoin="round"/><polygon points="328.80,334.39 334.15,328.87 326.39,328.43 321.04,331.78" fill="#70ff00" stroke="#000" stroke-opacity=".9" stroke-width=".38" stroke-linejoin="round"/><polygon points="297.22,339.53 302.57,336.24 294.81,334.16 289.46,337.47" fill="#69ff00" stroke="#000" stroke-opacity=".9" stroke-width=".38" stroke-linejoin="round"/><polygon points="265.65,343.23 271.00,341.67 263.23,339.62 257.88,341.17" fill="#6eff00" stroke="#000" stroke-opacity=".9" stroke-width=".38" stroke-linejoin="round"/><polygon points="310.34,338.32 315.69,335.05 307.92,332.95 302.57,336.24" fill="#6cff00" stroke="#000" stroke-opacity=".9" stroke-width=".38" stroke-linejoin="round"/><polygon points="278.76,343.71 284.11,340.76 276.35,338.71 271.00,341.67" fill="#68ff00" stroke="#000" stroke-opacity=".9" stroke-width=".38" stroke-linejoin="round"/><polygon points="247.18,342.52 252.53,341.83 244.77,339.52 239.42,339.99" fill="#91ff00" stroke="#000" stroke-opacity=".9" stroke-width=".38" stroke-linejoin="round"/><polygon points="323.45,337.66 328.80,334.39 321.04,331.78 315.69,335.05" fill="#6bff00" stroke="#000" stroke-opacity=".9" stroke-width=".38" stroke-linejoin="round"/><polygon points="291.87,342.81 297.22,339.53 289.46,337.47 284.11,340.76" fill="#69ff00" stroke="#000" stroke-opacity=".9" stroke-width=".38" stroke-linejoin="round"/><polygon points="260.30,344.12 265.65,343.23 257.88,341.17 252.53,341.83" fill="#7eff00" stroke="#000" stroke-opacity=".9" stroke-width=".38" stroke-linejoin="round"/><polygon points="304.99,341.59 310.34,338.32 302.57,336.24 297.22,339.53" fill="#6bff00" stroke="#000" stroke-opacity=".9" stroke-width=".38" stroke-linejoin="round"/><polygon points="273.41,345.29 278.76,343.71 271.00,341.67 265.65,343.23" fill="#70ff00" stroke="#000" stroke-opacity=".9" stroke-width=".38" stroke-linejoin="round"/><polygon points="318.10,340.93 323.45,337.66 315.69,335.05 310.34,338.32" fill="#6bff00" stroke="#000" stroke-opacity=".9" stroke-width=".38" stroke-linejoin="round"/><polygon points="286.52,345.75 291.87,342.81 284.11,340.76 278.76,343.71" fill="#6aff00" stroke="#000" stroke-opacity=".9" stroke-width=".38" stroke-linejoin="round"/><polygon points="254.95,345.04 260.30,344.12 252.53,341.83 247.18,342.52" fill="#90ff00" stroke="#000" stroke-opacity=".9" stroke-width=".38" stroke-linejoin="round"/><polygon points="299.64,344.86 304.99,341.59 297.22,339.53 291.87,342.81" fill="#6bff00" stroke="#000" stroke-opacity=".9" stroke-width=".38" stroke-linejoin="round"/><polygon points="268.06,346.42 273.41,345.29 265.65,343.23 260.30,344.12" fill="#7fff00" stroke="#000" stroke-opacity=".9" stroke-width=".38" stroke-linejoin="round"/><polygon points="312.75,344.20 318.10,340.93 310.34,338.32 304.99,341.59" fill="#6bff00" stroke="#000" stroke-opacity=".9" stroke-width=".38" stroke-linejoin="round"/><polygon points="281.17,347.35 286.52,345.75 278.76,343.71 273.41,345.29" fill="#72ff00" stroke="#000" stroke-opacity=".9" stroke-width=".38" stroke-linejoin="round"/><polygon points="294.29,347.79 299.64,344.86 291.87,342.81 286.52,345.75" fill="#6dff00" stroke="#000" stroke-opacity=".9" stroke-width=".38" stroke-linejoin="round"/><polygon points="262.71,347.56 268.06,346.42 260.30,344.12 254.95,345.04" fill="#90ff00" stroke="#000" stroke-opacity=".9" stroke-width=".38" stroke-linejoin="round"/><polygon points="307.40,347.47 312.75,344.20 304.99,341.59 299.64,344.86" fill="#6bff00" stroke="#000" stroke-opacity=".9" stroke-width=".38" stroke-linejoin="round"/><polygon points="275.82,348.71 281.17,347.35 273.41,345.29 268.06,346.42" fill="#80ff00" stroke="#000" stroke-opacity=".9" stroke-width=".38" stroke-linejoin="round"/><polygon points="288.94,349.40 294.29,347.79 286.52,345.75 281.17,347.35" fill="#74ff00" stroke="#000" stroke-opacity=".9" stroke-width=".38" stroke-linejoin="round"/><polygon points="302.05,350.51 307.40,347.47 299.64,344.86 294.29,347.79" fill="#6dff00" stroke="#000" stroke-opacity=".9" stroke-width=".38" stroke-linejoin="round"/><polygon points="270.47,350.09 275.82,348.71 268.06,346.42 262.71,347.56" fill="#8fff00" stroke="#000" stroke-opacity=".9" stroke-width=".38" stroke-linejoin="round"/><polygon points="283.59,351.01 288.94,349.40 281.17,347.35 275.82,348.71" fill="#81ff00" stroke="#000" stroke-opacity=".9" stroke-width=".38" stroke-linejoin="round"/><polygon points="296.70,352.67 302.05,350.51 294.29,347.79 288.94,349.40" fill="#73ff00" stroke="#000" stroke-opacity=".9" stroke-width=".38" stroke-linejoin="round"/><polygon points="278.24,352.61 283.59,351.01 275.82,348.71 270.47,350.09" fill="#8fff00" stroke="#000" stroke-opacity=".9" stroke-width=".38" stroke-linejoin="round"/><polygon points="291.35,354.22 296.70,352.67 288.94,349.40 283.59,351.01" fill="#7eff00" stroke="#000" stroke-opacity=".9" stroke-width=".38" stroke-linejoin="round"/><polygon points="286.00,355.36 291.35,354.22 283.59,351.01 278.24,352.61" fill="#8cff00" stroke="#000" stroke-opacity=".9" stroke-width=".38" stroke-linejoin="round"/><path d="M286.00 427.70L286.00 291.20" stroke="#a0a090" stroke-width="0.4" fill="none"/><path d="M286.00 291.20L200.60 266.40" stroke="#989890" stroke-width="0.4" fill="none"/><path d="M286.00 291.20L371.60 239.30" stroke="#989890" stroke-width="0.4" fill="none"/><path d="M200.60 401.10L200.60 266.40" stroke="#989890" stroke-width="0.4" fill="none"/><path d="M371.60 375.00L371.60 239.30" stroke="#989890" stroke-width="0.4" fill="none"/><path d="M200.60 266.40L286.20 214.60" stroke="#989890" stroke-width="0.4" fill="none"/><path d="M286.20 214.60L371.60 239.30" stroke="#989890" stroke-width="0.4" fill="none"/><path d="M286.00 427.70L200.60 401.10" stroke="#989890" stroke-width="0.4" fill="none"/><path d="M286.00 427.70L371.60 375.00" stroke="#989890" stroke-width="0.4" fill="none"/><text x="380" y="221.5" fill="#e6e04a" font-size="5.4" text-anchor="start">00C763 (у.е.)</text><text x="380" y="239.3" fill="#e4e4e4" font-size="5.3" text-anchor="start">255,00</text><text x="380" y="247.77" fill="#e4e4e4" font-size="5.3" text-anchor="start">239,06</text><text x="380" y="256.24" fill="#e4e4e4" font-size="5.3" text-anchor="start">223,13</text><text x="380" y="264.71000000000004" fill="#e4e4e4" font-size="5.3" text-anchor="start">207,19</text><text x="380" y="273.18" fill="#e4e4e4" font-size="5.3" text-anchor="start">191,25</text><text x="380" y="281.65000000000003" fill="#e4e4e4" font-size="5.3" text-anchor="start">175,31</text><text x="380" y="290.12" fill="#e4e4e4" font-size="5.3" text-anchor="start">159,38</text><text x="380" y="298.59000000000003" fill="#e4e4e4" font-size="5.3" text-anchor="start">143,44</text><text x="380" y="307.06" fill="#e4e4e4" font-size="5.3" text-anchor="start">127,50</text><text x="380" y="315.53000000000003" fill="#e4e4e4" font-size="5.3" text-anchor="start">111,56</text><text x="380" y="324.0" fill="#e4e4e4" font-size="5.3" text-anchor="start">95,63</text><text x="380" y="332.47" fill="#e4e4e4" font-size="5.3" text-anchor="start">79,69</text><text x="380" y="340.94000000000005" fill="#e4e4e4" font-size="5.3" text-anchor="start">63,75</text><text x="380" y="349.41" fill="#e4e4e4" font-size="5.3" text-anchor="start">47,81</text><text x="380" y="357.88" fill="#e4e4e4" font-size="5.3" text-anchor="start">31,88</text><text x="380" y="366.35" fill="#e4e4e4" font-size="5.3" text-anchor="start">15,94</text><text x="380" y="374.82000000000005" fill="#e4e4e4" font-size="5.3" text-anchor="start">0,00</text><text x="291.0" y="436.7" fill="#e4e4e4" font-size="5.3" text-anchor="middle">1</text><text x="301.9" y="430.2" fill="#e4e4e4" font-size="5.3" text-anchor="middle">3</text><text x="312.8" y="423.8" fill="#e4e4e4" font-size="5.3" text-anchor="middle">5</text><text x="323.7" y="417.3" fill="#e4e4e4" font-size="5.3" text-anchor="middle">7</text><text x="334.6" y="410.8" fill="#e4e4e4" font-size="5.3" text-anchor="middle">9</text><text x="345.5" y="404.3" fill="#e4e4e4" font-size="5.3" text-anchor="middle">11</text><text x="356.4" y="397.8" fill="#e4e4e4" font-size="5.3" text-anchor="middle">13</text><text x="367.3" y="391.4" fill="#e4e4e4" font-size="5.3" text-anchor="middle">15</text><text x="378.2" y="384.9" fill="#e4e4e4" font-size="5.3" text-anchor="middle">17</text><text x="281.2" y="436.7" fill="#e4e4e4" font-size="5.3" text-anchor="middle">1</text><text x="273.6" y="434.5" fill="#e4e4e4" font-size="5.3" text-anchor="middle">2</text><text x="266.0" y="432.3" fill="#e4e4e4" font-size="5.3" text-anchor="middle">3</text><text x="258.3" y="430.0" fill="#e4e4e4" font-size="5.3" text-anchor="middle">4</text><text x="250.7" y="427.8" fill="#e4e4e4" font-size="5.3" text-anchor="middle">5</text><text x="243.1" y="425.6" fill="#e4e4e4" font-size="5.3" text-anchor="middle">6</text><text x="235.5" y="423.4" fill="#e4e4e4" font-size="5.3" text-anchor="middle">7</text><text x="227.9" y="421.2" fill="#e4e4e4" font-size="5.3" text-anchor="middle">8</text><text x="220.3" y="419.0" fill="#e4e4e4" font-size="5.3" text-anchor="middle">9</text><text x="212.6" y="416.7" fill="#e4e4e4" font-size="5.3" text-anchor="middle">10</text><text x="205.0" y="414.5" fill="#e4e4e4" font-size="5.3" text-anchor="middle">11</text><text x="197.4" y="412.3" fill="#e4e4e4" font-size="5.3" text-anchor="middle">12</text><text x="342" y="421.5" fill="#e6e04a" font-size="5.2" text-anchor="start">ось X (у.е.)</text><text x="217.5" y="437.3" fill="#e6e04a" font-size="5.2" text-anchor="start">ось Z (у.е.)</text></svg>
<div style="left:0px;top:1171.0px;width:1920px;height:30.0px;background:linear-gradient(#3a7cec 0%,#2660dc 12%,#2056d6 50%,#1c4cc6 90%,#1840aa 100%)"></div>
<div style="left:0px;top:1171.0px;width:87.5px;height:30.0px;background:linear-gradient(#58b058 0%,#3a9a3a 20%,#2f8a2f 70%,#277a27 100%);border-radius:0 10px 10px 0"></div>
<svg style="left:8px;top:1177.0px" width="18" height="18" viewBox="0 0 18 18"><path d="M2 3q3-2 6 0v5q-3-2-6 0z" fill="#e85828"/><path d="M9 3q3 2 6 0v5q-3 2-6 0z" fill="#68c030"/><path d="M2 10q3-2 6 0v5q-3-2-6 0z" fill="#3888e8"/><path d="M9 10q3 2 6 0v5q-3 2-6 0z" fill="#f8c818"/></svg>
<div class="t b" style="left:27px;top:1179.0px;font-size:16px;color:#fff;font-style:italic;letter-spacing:.3px">пуск</div>
<div style="left:97.5px;top:1174.0px;width:158.0px;height:25.0px;background:linear-gradient(#5a9af8 0%,#3c80f0 18%,#3a7cee 80%,#2f6ce0 100%);border-radius:3px"></div>
<svg style="left:107.4px;top:1179.0px" width="12" height="16" viewBox="0 0 12 16"><rect x="1" y="1" width="10" height="14" fill="#f8e480" stroke="#b89820"/><rect x="4" y="1" width="3" height="14" fill="#c8a020"/></svg>
<div class="t" style="left:126.9px;top:1180.0px;color:#fff;letter-spacing:-0.141px;">C:\Program Files\Chip...</div>
<div style="left:258.1px;top:1174.0px;width:158.0px;height:25.0px;background:linear-gradient(#5a9af8 0%,#3c80f0 18%,#3a7cee 80%,#2f6ce0 100%);border-radius:3px"></div>
<svg style="left:266.6px;top:1179.0px" width="12" height="16" viewBox="0 0 12 16"><rect x="1" y="1" width="10" height="14" fill="#f8e480" stroke="#b89820"/><rect x="4" y="1" width="3" height="14" fill="#c8a020"/></svg>
<div class="t" style="left:286.1px;top:1180.0px;color:#fff;letter-spacing:0.052px;">K:\ChipExplorer\proje...</div>
<div style="left:416.1px;top:1174.0px;width:158.0px;height:25.0px;background:linear-gradient(#5a9af8 0%,#3c80f0 18%,#3a7cee 80%,#2f6ce0 100%);border-radius:3px"></div>
<svg style="left:426.8px;top:1179.0px" width="15" height="15" viewBox="0 0 16 16"><circle cx="8" cy="8" r="7" fill="#e8c020"/><path d="M8 1a7 7 0 0 1 6 3.5H8z" fill="#d83020"/><path d="M1.5 5a7 7 0 0 0 5 10L9 10z" fill="#38a838"/><circle cx="8" cy="8" r="3" fill="#3878e0" stroke="#fff"/></svg>
<div class="t" style="left:444.0px;top:1180.0px;color:#fff;letter-spacing:0.270px;">www.chipsoft.com.u...</div>
<div style="left:575.5px;top:1174.0px;width:158.0px;height:25.0px;background:linear-gradient(#1a48b8,#1e50c8 30%,#2058d0);border-radius:3px"></div>
<svg style="left:588.2px;top:1179.0px" width="14" height="16" viewBox="0 0 14 16"><path d="M3 2 L7 1 L11 4 L12 11 L8 15 L4 13 L2 8 Z" fill="#303848"/><path d="M4 3 L7 2 L9 5 L6 8 Z" fill="#7880a0"/></svg>
<div class="t" style="left:606.9px;top:1180.0px;color:#fff;letter-spacing:-0.192px;">ChipExplorer 2.1.21</div>
<div style="left:1845.9px;top:1171.0px;width:74.09999999999991px;height:30.0px;background:linear-gradient(#28b0f0 0%,#1898e8 15%,#1490e0 60%,#1080d0 100%);border-left:1px solid #1060b0"></div>
<div class="t" style="left:1788.8px;top:1180.0px;color:#fff">RU</div>
<div style="left:1810.1px;top:1181.0px;width:15.6px;height:10px;background:#e8e8e8;border:2px solid #203050;border-radius:2px"></div>
<svg style="left:1837.4px;top:1177.0px" width="18" height="18" viewBox="0 0 18 18"><ellipse cx="9" cy="9" rx="6.5" ry="8" fill="#4a98ec" stroke="#b0d4fa"/><path d="M6 6l6 6-3 3V3l3 3-6 6" fill="none" stroke="#fff" stroke-width="1.4"/></svg>
<svg style="left:1855.6px;top:1178.0px" width="18" height="16" viewBox="0 0 18 16"><path d="M1 15h3v-3H1zM5 15h3V9H5zM9 15h3V6H9zM13 15h3V2h-3z" fill="#c8d870" stroke="#587830" stroke-width=".6"/></svg>
<div class="t" style="left:1877.5px;top:1180.0px;color:#fff">22:46</div>
</div></body></html>
